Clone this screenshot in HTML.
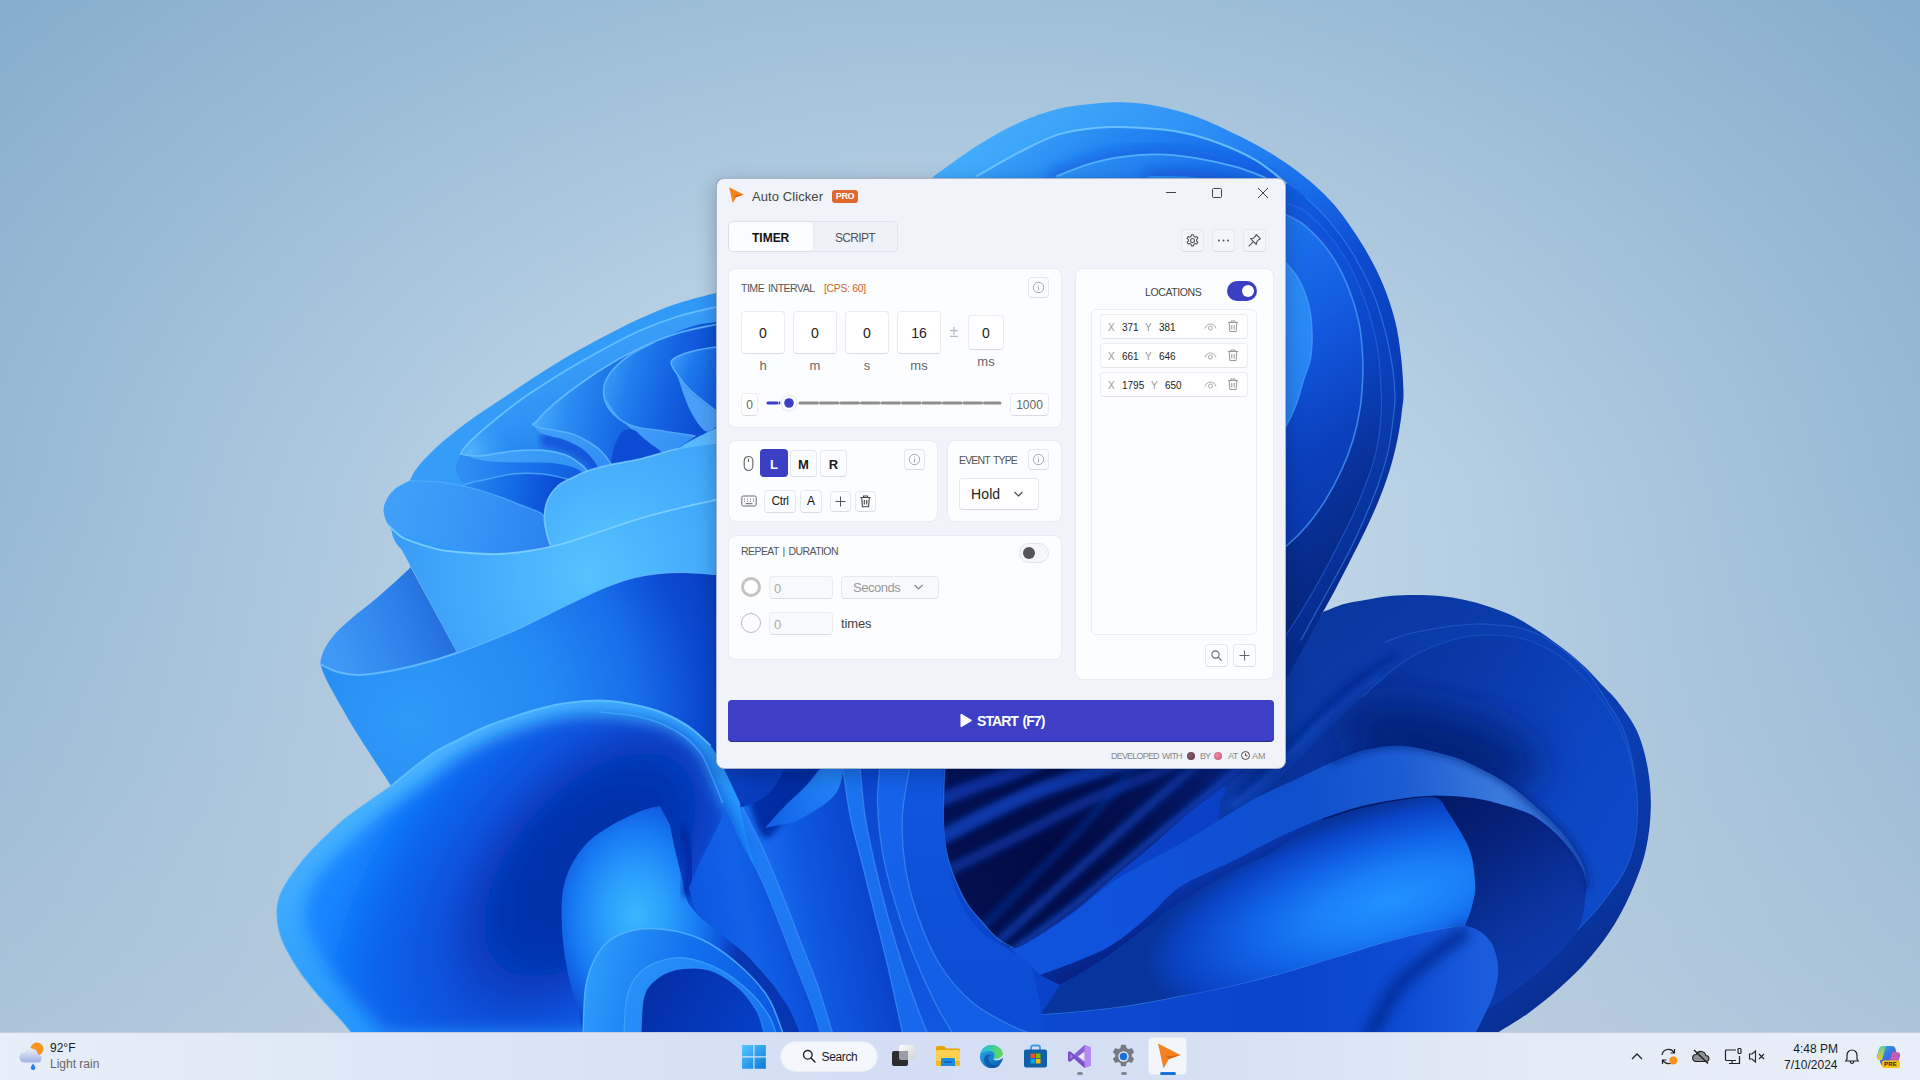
<!DOCTYPE html>
<html lang="en">
<head>
<meta charset="utf-8">
<title>Auto Clicker</title>
<style>
*{box-sizing:border-box;margin:0;padding:0}
html,body{width:1920px;height:1080px;overflow:hidden;background:#9fbfd9;font-family:"Liberation Sans",sans-serif;}
#desk{position:absolute;left:0;top:0;width:1920px;height:1080px;overflow:hidden}
#wall{position:absolute;left:0;top:0}
/* ---------- window ---------- */
#win{position:absolute;left:716px;top:178px;width:570px;height:591px;background:#f0f3f9;border:1px solid #a9b4c6;border-radius:8px;box-shadow:0 6px 20px rgba(0,10,50,.26),0 0 1px rgba(0,0,0,.3);color:#333}
.abs{position:absolute}
#wc{position:absolute;left:0;top:0;width:0;height:0;color:#333}
.loc{border-color:#eceef4 !important;border-bottom-color:#e2e5ec !important}
.lx{font-size:10px;line-height:13px;color:#222}
.ft{font-size:9px;line-height:12px;color:#8a8a8a}
.em{display:inline-block;width:8px;height:8px;border-radius:4px;vertical-align:-1px;box-sizing:border-box}
.card{position:absolute;background:#fcfdff;border:1px solid #e8ebf3;border-radius:8px}
.btn{position:absolute;background:#fcfdff;border:1px solid #e6e8ef;border-bottom-color:#d9dce5;border-radius:4px}
.lbl{position:absolute;font-size:10.5px;color:#555;white-space:nowrap;letter-spacing:-.1px}
.num{position:absolute;background:#fff;border:1px solid #eaecf2;border-bottom-color:#d9dce4;border-radius:4px;font-size:14px;color:#222;text-align:center}
.unit{position:absolute;font-size:13px;color:#666;text-align:center;width:40px}
.t{position:absolute;white-space:nowrap}
/* ---------- taskbar ---------- */
#tb{position:absolute;left:0;top:1032px;width:1920px;height:48px;background:linear-gradient(90deg,#e6eef8 0%,#dfe8f6 18%,#d3def4 45%,#d6e0f4 62%,#e3ebf6 80%,#e9eff8 100%);border-top:1px solid #c3cedd}
#tbc{position:absolute;left:0;top:0;width:0;height:0}
#tbc .t{color:#1b1b1b;font-size:12px}
</style>
</head>
<body>
<div id="desk">
<svg id="wall" width="1920" height="1080" viewBox="0 0 1920 1080">
<defs>
<radialGradient id="bg" gradientUnits="userSpaceOnUse" cx="960" cy="700" r="1300"><stop offset="0" stop-color="#cfe0ee"/><stop offset="0.3" stop-color="#c0d6e7"/><stop offset="0.55" stop-color="#a9c6dd"/><stop offset="0.8" stop-color="#93b6d3"/><stop offset="1" stop-color="#7fa9ca"/></radialGradient>
<linearGradient id="bgl" gradientUnits="userSpaceOnUse" x1="0" y1="0" x2="0" y2="1080"><stop offset="0" stop-color="#7ea8c9" stop-opacity="0.25"/><stop offset="0.45" stop-color="#a6c1d9" stop-opacity="0"/><stop offset="1" stop-color="#c2cfdd" stop-opacity="0.6"/></linearGradient>
<linearGradient id="A0" gradientUnits="userSpaceOnUse" x1="1000" y1="120" x2="1400" y2="560"><stop offset="0" stop-color="#42acfb"/><stop offset="0.22" stop-color="#2f92f6"/><stop offset="0.42" stop-color="#1a70ec"/><stop offset="0.58" stop-color="#0c4bd0"/><stop offset="0.75" stop-color="#0a3cb6"/><stop offset="1" stop-color="#062a88"/></linearGradient>
<linearGradient id="A1" gradientUnits="userSpaceOnUse" x1="1000" y1="130" x2="1390" y2="560"><stop offset="0" stop-color="#3ea4fa"/><stop offset="0.15" stop-color="#2486f2"/><stop offset="0.35" stop-color="#1468e8"/><stop offset="0.55" stop-color="#0c4cd2"/><stop offset="0.75" stop-color="#0b40ba"/><stop offset="1" stop-color="#062c8e"/></linearGradient>
<linearGradient id="A2" gradientUnits="userSpaceOnUse" x1="1060" y1="150" x2="1375" y2="560"><stop offset="0" stop-color="#3096f6"/><stop offset="0.2" stop-color="#1c74ec"/><stop offset="0.45" stop-color="#0f56dc"/><stop offset="0.65" stop-color="#0c46c6"/><stop offset="0.85" stop-color="#083098"/><stop offset="1" stop-color="#062880"/></linearGradient>
<linearGradient id="A3" gradientUnits="userSpaceOnUse" x1="1150" y1="180" x2="1350" y2="520"><stop offset="0" stop-color="#2a8cf4"/><stop offset="0.3" stop-color="#1b72ec"/><stop offset="0.55" stop-color="#1258de"/><stop offset="0.8" stop-color="#0b40bc"/><stop offset="1" stop-color="#0a38ac"/></linearGradient>
<linearGradient id="A4" gradientUnits="userSpaceOnUse" x1="1200" y1="230" x2="1310" y2="420"><stop offset="0" stop-color="#2f93f7"/><stop offset="0.6" stop-color="#2a8af5"/><stop offset="1" stop-color="#2582f2"/></linearGradient>
<filter id="bl8" x="-20%" y="-20%" width="140%" height="140%"><feGaussianBlur stdDeviation="8"/></filter><filter id="bl6" x="-20%" y="-20%" width="140%" height="140%"><feGaussianBlur stdDeviation="6"/></filter><filter id="bl3" x="-20%" y="-20%" width="140%" height="140%"><feGaussianBlur stdDeviation="3"/></filter><filter id="bl12" x="-30%" y="-30%" width="160%" height="160%"><feGaussianBlur stdDeviation="12"/></filter><filter id="bl20" x="-40%" y="-40%" width="180%" height="180%"><feGaussianBlur stdDeviation="20"/></filter>
<linearGradient id="E0" gradientUnits="userSpaceOnUse" x1="600" y1="760" x2="1300" y2="1030"><stop offset="0" stop-color="#0a40c8"/><stop offset="0.3" stop-color="#0c4cd6"/><stop offset="0.6" stop-color="#0a44cc"/><stop offset="1" stop-color="#093cbe"/></linearGradient>
<linearGradient id="F0" gradientUnits="userSpaceOnUse" x1="1330" y1="600" x2="1640" y2="980"><stop offset="0" stop-color="#0a379f"/><stop offset="0.3" stop-color="#0b3cae"/><stop offset="0.6" stop-color="#0b3eb2"/><stop offset="0.85" stop-color="#09339c"/><stop offset="1" stop-color="#072a86"/></linearGradient>
<linearGradient id="F1" gradientUnits="userSpaceOnUse" x1="1340" y1="640" x2="1640" y2="900"><stop offset="0" stop-color="#0a38a4"/><stop offset="0.4" stop-color="#0b3fb4"/><stop offset="0.8" stop-color="#0e47c4"/><stop offset="1" stop-color="#0d44be"/></linearGradient>
<linearGradient id="F2" gradientUnits="userSpaceOnUse" x1="1380" y1="660" x2="1640" y2="820"><stop offset="0" stop-color="#09339c"/><stop offset="0.35" stop-color="#0a3aac"/><stop offset="0.7" stop-color="#0d45c0"/><stop offset="1" stop-color="#0e49c8"/></linearGradient>
<linearGradient id="F4" gradientUnits="userSpaceOnUse" x1="1440" y1="800" x2="1560" y2="980"><stop offset="0" stop-color="#041a66"/><stop offset="0.3" stop-color="#06227c"/><stop offset="0.65" stop-color="#0a339e"/><stop offset="1" stop-color="#0c3cb0"/></linearGradient>
<linearGradient id="F3" gradientUnits="userSpaceOnUse" x1="1100" y1="900" x2="1580" y2="850"><stop offset="0" stop-color="#0f52dc"/><stop offset="0.2" stop-color="#0f50d6"/><stop offset="0.45" stop-color="#1050cc"/><stop offset="0.65" stop-color="#1c5cd2"/><stop offset="0.85" stop-color="#3a7adc"/><stop offset="1" stop-color="#2a66d0"/></linearGradient>
<linearGradient id="F6" gradientUnits="userSpaceOnUse" x1="1200" y1="870" x2="1215" y2="900"><stop offset="0" stop-color="#0a38b0"/><stop offset="1" stop-color="#06248a"/></linearGradient>
<radialGradient id="F5" gradientUnits="userSpaceOnUse" cx="1390" cy="900" r="150" gradientTransform="translate(1390 900) rotate(-17) scale(1.7 .62) rotate(17) translate(-1390 -900)"><stop offset="0" stop-color="#2092ff"/><stop offset="0.3" stop-color="#1a80f8"/><stop offset="0.6" stop-color="#1060e4"/><stop offset="0.85" stop-color="#0a44c6"/><stop offset="1" stop-color="#08349e"/></radialGradient>
<linearGradient id="F7" gradientUnits="userSpaceOnUse" x1="1100" y1="1000" x2="1480" y2="1000"><stop offset="0" stop-color="#0c48d0"/><stop offset="0.5" stop-color="#0a44cc"/><stop offset="0.8" stop-color="#0d4cd4"/><stop offset="1" stop-color="#1a5cdc"/></linearGradient>
<radialGradient id="Eh" gradientUnits="userSpaceOnUse" cx="1050" cy="850" r="200"><stop offset="0" stop-color="#020a42"/><stop offset="0.5" stop-color="#03104f"/><stop offset="0.8" stop-color="#051868"/><stop offset="1" stop-color="#08268c"/></radialGradient>
<linearGradient id="E4" gradientUnits="userSpaceOnUse" x1="770" y1="900" x2="880" y2="880"><stop offset="0" stop-color="#186cf0"/><stop offset="0.35" stop-color="#0f58e0"/><stop offset="1" stop-color="#0a40c8"/></linearGradient>
<linearGradient id="E4b" gradientUnits="userSpaceOnUse" x1="770" y1="825" x2="825" y2="770"><stop offset="0" stop-color="#1464ea"/><stop offset="1" stop-color="#2488fa"/></linearGradient>
<linearGradient id="E3b" gradientUnits="userSpaceOnUse" x1="0" y1="766" x2="0" y2="1033"><stop offset="0" stop-color="#2280f6"/><stop offset="1" stop-color="#1a74f0"/></linearGradient>
<linearGradient id="E5" gradientUnits="userSpaceOnUse" x1="0" y1="766" x2="0" y2="1033"><stop offset="0" stop-color="#1a74f0"/><stop offset="1" stop-color="#1668ec"/></linearGradient>
<linearGradient id="E6" gradientUnits="userSpaceOnUse" x1="0" y1="766" x2="0" y2="1033"><stop offset="0" stop-color="#0b46ce"/><stop offset="1" stop-color="#1058e0"/></linearGradient>
<linearGradient id="E7" gradientUnits="userSpaceOnUse" x1="0" y1="766" x2="0" y2="1033"><stop offset="0" stop-color="#1564ea"/><stop offset="1" stop-color="#125ee6"/></linearGradient>
<linearGradient id="E9" gradientUnits="userSpaceOnUse" x1="0" y1="766" x2="0" y2="1033"><stop offset="0" stop-color="#0f56de"/><stop offset="1" stop-color="#0c4cd4"/></linearGradient>
<linearGradient id="B0" gradientUnits="userSpaceOnUse" x1="420" y1="300" x2="700" y2="560"><stop offset="0" stop-color="#3ca4fa"/><stop offset="0.5" stop-color="#3199f7"/><stop offset="1" stop-color="#2a8cf3"/></linearGradient>
<linearGradient id="B1" gradientUnits="userSpaceOnUse" x1="560" y1="360" x2="600" y2="470"><stop offset="0" stop-color="#3a9ef8"/><stop offset="0.4" stop-color="#2f92f5"/><stop offset="0.75" stop-color="#2482f0"/><stop offset="1" stop-color="#1a72ea"/></linearGradient>
<radialGradient id="B1g" gradientUnits="userSpaceOnUse" cx="470" cy="452" r="40"><stop offset="0" stop-color="#56b8fd" stop-opacity="0.9"/><stop offset="1" stop-color="#3a9ef8" stop-opacity="0"/></radialGradient>
<linearGradient id="B2" gradientUnits="userSpaceOnUse" x1="535" y1="410" x2="690" y2="440"><stop offset="0" stop-color="#48acfb"/><stop offset="0.2" stop-color="#2c8cf3"/><stop offset="0.55" stop-color="#1668e4"/><stop offset="1" stop-color="#0c4cd2"/></linearGradient>
<linearGradient id="B2u" gradientUnits="userSpaceOnUse" x1="540" y1="430" x2="600" y2="465"><stop offset="0" stop-color="#429ff8"/><stop offset="1" stop-color="#3290f4"/></linearGradient>
<linearGradient id="B3" gradientUnits="userSpaceOnUse" x1="603" y1="395" x2="716" y2="425"><stop offset="0" stop-color="#3696f6"/><stop offset="0.18" stop-color="#2280ee"/><stop offset="0.55" stop-color="#1260e0"/><stop offset="1" stop-color="#0a46cc"/></linearGradient>
<linearGradient id="B3u" gradientUnits="userSpaceOnUse" x1="610" y1="400" x2="680" y2="450"><stop offset="0" stop-color="#4aa6fa"/><stop offset="1" stop-color="#3590f4"/></linearGradient>
<linearGradient id="B4" gradientUnits="userSpaceOnUse" x1="670" y1="365" x2="716" y2="385"><stop offset="0" stop-color="#3a98f7"/><stop offset="0.4" stop-color="#1e78ec"/><stop offset="1" stop-color="#1462e2"/></linearGradient>
<linearGradient id="B1u" gradientUnits="userSpaceOnUse" x1="470" y1="458" x2="585" y2="470"><stop offset="0" stop-color="#44a4fa"/><stop offset="1" stop-color="#3292f4"/></linearGradient>
<linearGradient id="B7" gradientUnits="userSpaceOnUse" x1="465" y1="470" x2="575" y2="475"><stop offset="0" stop-color="#2e8ef4"/><stop offset="0.5" stop-color="#1c74ec"/><stop offset="1" stop-color="#1060e0"/></linearGradient>
<linearGradient id="B6" gradientUnits="userSpaceOnUse" x1="470" y1="485" x2="560" y2="500"><stop offset="0" stop-color="#2486f0"/><stop offset="0.5" stop-color="#1468e6"/><stop offset="1" stop-color="#0848d0"/></linearGradient>
<linearGradient id="C6" gradientUnits="userSpaceOnUse" x1="390" y1="500" x2="560" y2="540"><stop offset="0" stop-color="#40a0f9"/><stop offset="0.5" stop-color="#3794f6"/><stop offset="1" stop-color="#2a80ee"/></linearGradient>
<radialGradient id="C5" gradientUnits="userSpaceOnUse" cx="610" cy="560" r="190"><stop offset="0" stop-color="#58c4ff"/><stop offset="0.45" stop-color="#48b0fc"/><stop offset="1" stop-color="#3a9ef8"/></radialGradient>
<radialGradient id="C2o" gradientUnits="userSpaceOnUse" cx="410" cy="720" r="350"><stop offset="0" stop-color="#2f9af8"/><stop offset="0.4" stop-color="#248af3"/><stop offset="0.65" stop-color="#186eea"/><stop offset="0.83" stop-color="#0b4ad2"/><stop offset="1" stop-color="#083cbc"/></radialGradient>
<linearGradient id="C2i" gradientUnits="userSpaceOnUse" x1="330" y1="650" x2="470" y2="600"><stop offset="0" stop-color="#4099f6"/><stop offset="0.45" stop-color="#2f84ec"/><stop offset="1" stop-color="#1c62d4"/></linearGradient>
<radialGradient id="C1" gradientUnits="userSpaceOnUse" cx="590" cy="575" r="230"><stop offset="0" stop-color="#56c2ff"/><stop offset="0.4" stop-color="#47b0fc"/><stop offset="0.8" stop-color="#3a9ef8"/><stop offset="1" stop-color="#3496f6"/></radialGradient>
<linearGradient id="D0" gradientUnits="userSpaceOnUse" x1="285" y1="790" x2="420" y2="1030"><stop offset="0" stop-color="#52b8ff"/><stop offset="0.45" stop-color="#38a6fe"/><stop offset="1" stop-color="#2092fc"/></linearGradient>
<radialGradient id="D1" gradientUnits="userSpaceOnUse" cx="590" cy="865" r="200" gradientTransform="translate(590 865) rotate(-48.400) scale(1.800 1) translate(-590 -865)"><stop offset="0" stop-color="#052ea6"/><stop offset="0.3" stop-color="#0434ae"/><stop offset="0.42" stop-color="#0840c4"/><stop offset="0.52" stop-color="#0a50da"/><stop offset="0.66" stop-color="#0c5ce6"/><stop offset="0.82" stop-color="#0e6af2"/><stop offset="1" stop-color="#1486ff"/></radialGradient>
<radialGradient id="Dc" gradientUnits="userSpaceOnUse" cx="636" cy="915" r="125" gradientTransform="translate(636 915) scale(.850 1.150) translate(-636 -915)"><stop offset="0" stop-color="#38b8ff"/><stop offset="0.3" stop-color="#2a9efc"/><stop offset="0.58" stop-color="#187cf4"/><stop offset="0.8" stop-color="#0e58de"/><stop offset="0.93" stop-color="#0a40c2"/><stop offset="1" stop-color="#0836b2"/></radialGradient>
<linearGradient id="Dw" gradientUnits="userSpaceOnUse" x1="690" y1="900" x2="790" y2="880"><stop offset="0" stop-color="#0d56e0"/><stop offset="0.5" stop-color="#1262e8"/><stop offset="1" stop-color="#0b4cd8"/></linearGradient>
<linearGradient id="Dr1" gradientUnits="userSpaceOnUse" x1="590" y1="960" x2="780" y2="1000"><stop offset="0" stop-color="#2c9cfb"/><stop offset="0.5" stop-color="#1270ee"/><stop offset="1" stop-color="#0c58e0"/></linearGradient>
<linearGradient id="Dr2" gradientUnits="userSpaceOnUse" x1="630" y1="960" x2="770" y2="1030"><stop offset="0" stop-color="#2a90f8"/><stop offset="0.6" stop-color="#1e84f6"/><stop offset="1" stop-color="#1670ee"/></linearGradient>
<linearGradient id="Dr3" gradientUnits="userSpaceOnUse" x1="650" y1="970" x2="760" y2="1033"><stop offset="0" stop-color="#042ea6"/><stop offset="0.6" stop-color="#0538b8"/><stop offset="1" stop-color="#0640c8"/></linearGradient>
</defs>
<rect width="1920" height="1080" fill="url(#bg)"/><rect width="1920" height="1080" fill="url(#bgl)"/>
<path fill="url(#A0)"  d="M934.0,176.0C941.5,170.8 964.8,153.4 979.0,144.5C993.2,135.6 1005.8,128.6 1019.0,122.7C1032.2,116.8 1044.8,112.2 1058.0,109.0C1071.2,105.8 1086.3,104.4 1098.0,103.3C1109.7,102.2 1118.2,102.0 1128.0,102.5C1137.8,103.0 1145.5,103.6 1157.0,106.0C1168.5,108.4 1183.7,112.2 1197.0,117.0C1210.3,121.8 1226.2,129.8 1237.0,135.0C1247.8,140.2 1253.8,143.3 1262.0,148.0C1270.2,152.7 1278.7,158.0 1286.0,163.0C1293.3,168.0 1299.7,172.8 1306.0,178.0C1312.3,183.2 1318.0,187.9 1324.0,194.0C1330.0,200.1 1335.0,205.2 1342.0,214.6C1349.0,224.0 1359.2,239.1 1366.0,250.7C1372.8,262.3 1378.2,272.8 1383.0,284.4C1387.8,296.0 1392.0,308.5 1395.0,320.5C1398.0,332.5 1399.6,344.6 1401.0,356.5C1402.4,368.4 1403.3,383.1 1403.5,392.0C1403.7,400.9 1402.8,403.2 1402.0,410.0C1401.2,416.8 1400.5,424.0 1398.7,433.0C1397.0,442.0 1394.5,453.6 1391.5,464.0C1388.5,474.4 1385.0,484.7 1380.7,495.5C1376.5,506.3 1371.3,517.8 1366.0,529.0C1360.7,540.2 1354.3,552.5 1349.0,563.0C1343.7,573.5 1338.3,583.8 1334.0,592.0C1329.7,600.2 1324.8,608.7 1323.0,612.0L1323.0,612.0C1309.2,640.0 1310.5,752.0 1240.0,780.0C1169.5,808.0 956.7,871.7 900.0,780.0C843.3,688.3 900.0,321.7 900.0,230.0Z"/>
<path fill="url(#A1)"  d="M977.0,176.0C984.0,172.1 1005.5,159.3 1019.0,152.4C1032.5,145.5 1044.8,138.7 1058.0,134.6C1071.2,130.5 1084.7,128.8 1098.0,127.7C1111.3,126.6 1124.8,127.1 1138.0,127.7C1151.2,128.3 1163.8,129.1 1177.0,131.6C1190.2,134.1 1203.8,137.7 1217.0,142.5C1230.2,147.3 1244.5,153.6 1256.0,160.3C1267.5,167.1 1277.7,176.8 1286.0,183.0C1294.3,189.2 1298.7,191.2 1306.0,197.7C1313.3,204.2 1322.0,212.2 1330.0,221.8C1338.0,231.4 1346.8,243.5 1354.0,255.5C1361.2,267.5 1368.2,281.2 1373.5,294.0C1378.8,306.8 1382.3,320.1 1385.5,332.5C1388.7,344.9 1391.1,358.2 1392.7,368.6C1394.3,379.0 1394.8,387.9 1395.0,395.0C1395.2,402.1 1395.0,402.3 1394.0,411.0C1393.0,419.7 1391.4,435.3 1389.0,447.0C1386.6,458.7 1383.3,469.7 1379.5,481.0C1375.7,492.3 1371.0,503.0 1366.0,514.7C1361.0,526.4 1355.4,539.0 1349.4,551.0C1343.4,563.0 1335.2,577.4 1330.0,587.0C1324.8,596.6 1322.8,599.8 1318.0,608.6C1313.2,617.4 1303.8,634.8 1301.0,640.0L1301.0,640.0C1290.8,663.3 1306.8,756.7 1240.0,780.0C1173.2,803.3 956.7,868.3 900.0,780.0C843.3,691.7 900.0,338.3 900.0,250.0Z"/>
<path fill="none" stroke="#0f58de" stroke-width="16" stroke-opacity="0.6" stroke-linecap="round" filter="url(#bl6)" d="M1057.0,176.0C1062.2,174.1 1077.8,167.4 1088.0,164.3C1098.2,161.2 1106.5,159.0 1118.0,157.3C1129.5,155.7 1143.8,154.2 1157.0,154.4C1170.2,154.6 1183.7,156.2 1197.0,158.3C1210.3,160.4 1225.5,163.9 1237.0,167.2C1248.5,170.5 1257.8,172.1 1266.0,178.0C1274.2,183.9 1279.3,196.9 1286.0,202.6C1292.7,208.3 1302.7,210.4 1306.0,212.0"/>
<path fill="url(#A2)"  d="M1057.0,176.0C1062.2,174.1 1077.8,167.4 1088.0,164.3C1098.2,161.2 1106.5,159.0 1118.0,157.3C1129.5,155.7 1143.8,154.2 1157.0,154.4C1170.2,154.6 1183.7,156.2 1197.0,158.3C1210.3,160.4 1225.5,163.9 1237.0,167.2C1248.5,170.5 1257.8,172.1 1266.0,178.0C1274.2,183.9 1279.3,196.9 1286.0,202.6C1292.7,208.3 1298.7,206.4 1306.0,212.0C1313.3,217.6 1322.8,227.2 1330.0,236.0C1337.2,244.8 1343.4,253.7 1349.4,265.0C1355.4,276.3 1361.6,291.2 1366.0,303.6C1370.4,316.1 1373.5,327.0 1376.0,339.7C1378.5,352.4 1379.9,367.3 1380.7,380.0C1381.5,392.7 1381.8,404.0 1381.0,416.0C1380.2,428.0 1378.5,440.8 1376.0,452.0C1373.5,463.2 1370.0,472.7 1366.0,483.5C1362.0,494.3 1357.2,505.8 1352.0,517.0C1346.8,528.2 1341.0,539.3 1335.0,551.0C1329.0,562.7 1322.5,575.0 1315.7,587.0C1308.9,599.0 1299.0,615.0 1294.0,623.0C1289.0,631.0 1287.3,633.0 1286.0,635.0L1286.0,635.0C1278.3,659.2 1304.3,755.8 1240.0,780.0C1175.7,804.2 956.7,860.0 900.0,780.0C843.3,700.0 900.0,380.0 900.0,300.0Z"/>
<path fill="none" stroke="#0c4cd2" stroke-width="14" stroke-opacity="0.55" stroke-linecap="round" filter="url(#bl6)" d="M1150.0,176.0C1158.3,176.3 1183.3,175.3 1200.0,178.0C1216.7,180.7 1235.7,185.9 1250.0,192.0C1264.3,198.1 1276.7,208.8 1286.0,214.6C1295.3,220.4 1298.7,220.2 1306.0,226.6C1313.3,233.0 1326.0,248.6 1330.0,253.0"/>
<path fill="url(#A3)"  d="M1150.0,176.0C1158.3,176.3 1183.3,175.3 1200.0,178.0C1216.7,180.7 1235.7,185.9 1250.0,192.0C1264.3,198.1 1276.7,208.8 1286.0,214.6C1295.3,220.4 1298.7,220.2 1306.0,226.6C1313.3,233.0 1323.2,243.4 1330.0,253.0C1336.8,262.6 1342.2,272.7 1347.0,284.4C1351.8,296.1 1356.4,311.0 1359.0,323.0C1361.6,335.0 1362.0,347.0 1362.6,356.5C1363.2,366.0 1363.0,371.2 1362.6,380.0C1362.2,388.8 1361.6,399.0 1360.0,409.0C1358.4,419.0 1356.0,430.0 1353.0,440.0C1350.0,450.0 1346.6,458.9 1342.0,469.0C1337.4,479.1 1331.3,490.7 1325.3,500.3C1319.3,509.9 1312.5,519.2 1306.0,526.8C1299.5,534.4 1294.1,539.5 1286.4,546.0C1278.7,552.5 1264.4,562.7 1260.0,566.0L1260.0,566.0C1250.0,588.3 1260.0,677.7 1200.0,700.0C1140.0,722.3 950.0,766.7 900.0,700.0C850.0,633.3 900.0,366.7 900.0,300.0Z"/>
<path fill="none" stroke="#4a9cf8" stroke-width="1.6" stroke-opacity="0.75" stroke-linecap="round"  d="M1286.0,214.6C1289.3,216.6 1298.7,220.2 1306.0,226.6C1313.3,233.0 1323.2,243.4 1330.0,253.0C1336.8,262.6 1342.2,272.7 1347.0,284.4C1351.8,296.1 1356.4,311.0 1359.0,323.0C1361.6,335.0 1362.0,347.0 1362.6,356.5C1363.2,366.0 1363.0,371.2 1362.6,380.0C1362.2,388.8 1361.6,399.0 1360.0,409.0C1358.4,419.0 1356.0,430.0 1353.0,440.0C1350.0,450.0 1346.6,458.9 1342.0,469.0C1337.4,479.1 1331.3,490.7 1325.3,500.3C1319.3,509.9 1312.5,519.2 1306.0,526.8C1299.5,534.4 1294.1,539.5 1286.4,546.0C1278.7,552.5 1264.4,562.7 1260.0,566.0"/>
<path fill="url(#A4)"  d="M1200.0,200.0C1208.3,204.7 1235.7,217.6 1250.0,228.0C1264.3,238.4 1277.8,254.1 1286.0,262.7C1294.2,271.3 1295.2,272.8 1299.0,279.6C1302.8,286.4 1306.3,295.6 1308.5,303.6C1310.7,311.6 1311.6,318.9 1312.0,327.7C1312.4,336.5 1312.4,347.8 1311.0,356.5C1309.6,365.2 1306.1,372.1 1303.7,380.0C1301.3,387.9 1299.4,396.4 1296.5,404.0C1293.6,411.6 1290.8,418.0 1286.4,425.7C1282.0,433.4 1272.7,445.9 1270.0,450.0L1270.0,450.0C1258.3,475.0 1261.7,575.0 1200.0,600.0C1138.3,625.0 950.0,650.0 900.0,600.0C850.0,550.0 900.0,350.0 900.0,300.0Z"/>
<path fill="none" stroke="#55aaff" stroke-width="1.2" stroke-opacity="0.6" stroke-linecap="round"  d="M1286.0,262.7C1288.2,265.5 1295.2,272.8 1299.0,279.6C1302.8,286.4 1306.3,295.6 1308.5,303.6C1310.7,311.6 1311.6,318.9 1312.0,327.7C1312.4,336.5 1312.4,347.8 1311.0,356.5C1309.6,365.2 1306.1,372.1 1303.7,380.0C1301.3,387.9 1299.4,396.4 1296.5,404.0C1293.6,411.6 1290.8,418.0 1286.4,425.7C1282.0,433.4 1272.7,445.9 1270.0,450.0"/>
<path fill="none" stroke="#74c8ff" stroke-width="2" stroke-opacity="0.85" stroke-linecap="round"  d="M977.0,176.0C984.0,172.1 1005.5,159.3 1019.0,152.4C1032.5,145.5 1044.8,138.7 1058.0,134.6C1071.2,130.5 1084.7,128.8 1098.0,127.7C1111.3,126.6 1124.8,127.1 1138.0,127.7C1151.2,128.3 1163.8,129.1 1177.0,131.6C1190.2,134.1 1203.8,137.7 1217.0,142.5C1230.2,147.3 1244.5,153.6 1256.0,160.3C1267.5,167.1 1281.0,179.2 1286.0,183.0"/>
<path fill="none" stroke="#3f8ef0" stroke-width="1.2" stroke-opacity="0.55" stroke-linecap="round"  d="M1306.0,197.7C1310.0,201.7 1322.0,212.2 1330.0,221.8C1338.0,231.4 1346.8,243.5 1354.0,255.5C1361.2,267.5 1368.2,281.2 1373.5,294.0C1378.8,306.8 1382.3,320.1 1385.5,332.5C1388.7,344.9 1391.1,358.2 1392.7,368.6C1394.3,379.0 1394.8,387.9 1395.0,395.0C1395.2,402.1 1395.0,402.3 1394.0,411.0C1393.0,419.7 1391.4,435.3 1389.0,447.0C1386.6,458.7 1383.3,469.7 1379.5,481.0C1375.7,492.3 1371.0,503.0 1366.0,514.7C1361.0,526.4 1355.4,539.0 1349.4,551.0C1343.4,563.0 1335.2,577.4 1330.0,587.0C1324.8,596.6 1322.8,599.8 1318.0,608.6C1313.2,617.4 1303.8,634.8 1301.0,640.0"/>
<path fill="none" stroke="#62bcff" stroke-width="1.8" stroke-opacity="0.8" stroke-linecap="round"  d="M1057.0,176.0C1062.2,174.1 1077.8,167.4 1088.0,164.3C1098.2,161.2 1106.5,159.0 1118.0,157.3C1129.5,155.7 1143.8,154.2 1157.0,154.4C1170.2,154.6 1183.7,156.2 1197.0,158.3C1210.3,160.4 1225.5,163.9 1237.0,167.2C1248.5,170.5 1261.2,176.2 1266.0,178.0"/>
<path fill="none" stroke="#2f7ae8" stroke-width="1.1" stroke-opacity="0.5" stroke-linecap="round"  d="M1286.0,202.6C1289.3,204.2 1298.7,206.4 1306.0,212.0C1313.3,217.6 1322.8,227.2 1330.0,236.0C1337.2,244.8 1343.4,253.7 1349.4,265.0C1355.4,276.3 1361.6,291.2 1366.0,303.6C1370.4,316.1 1373.5,327.0 1376.0,339.7C1378.5,352.4 1379.9,367.3 1380.7,380.0C1381.5,392.7 1381.8,404.0 1381.0,416.0C1380.2,428.0 1378.5,440.8 1376.0,452.0C1373.5,463.2 1370.0,472.7 1366.0,483.5C1362.0,494.3 1357.2,505.8 1352.0,517.0C1346.8,528.2 1341.0,539.3 1335.0,551.0C1329.0,562.7 1322.5,575.0 1315.7,587.0C1308.9,599.0 1299.0,615.0 1294.0,623.0C1289.0,631.0 1287.3,633.0 1286.0,635.0"/>
<path fill="url(#E0)"  d="M560.0,700.0C683.3,700.0 1176.7,644.5 1300.0,700.0C1423.3,755.5 1423.3,977.5 1300.0,1033.0C1176.7,1088.5 683.3,1033.0 560.0,1033.0Z"/>
<path fill="url(#F0)"  d="M1323.0,612.0C1326.5,610.7 1337.0,606.0 1344.0,604.0C1351.0,602.0 1357.3,601.3 1365.0,600.0C1372.7,598.7 1381.7,596.8 1390.0,596.0C1398.3,595.2 1406.7,595.0 1415.0,595.0C1423.3,595.0 1431.7,595.2 1440.0,596.0C1448.3,596.8 1456.7,598.2 1465.0,600.0C1473.3,601.8 1481.7,604.2 1490.0,607.0C1498.3,609.8 1506.7,612.8 1515.0,617.0C1523.3,621.2 1531.7,626.5 1540.0,632.0C1548.3,637.5 1557.5,644.2 1565.0,650.0C1572.5,655.8 1578.8,661.2 1585.0,667.0C1591.2,672.8 1596.5,679.2 1602.0,685.0C1607.5,690.8 1612.2,694.3 1618.0,702.0C1623.8,709.7 1632.0,720.0 1637.0,731.0C1642.0,742.0 1645.4,755.2 1647.7,768.0C1650.0,780.8 1651.1,794.5 1650.8,808.0C1650.5,821.5 1648.8,836.0 1646.0,849.0C1643.2,862.0 1638.9,873.6 1633.7,886.0C1628.5,898.4 1622.3,911.5 1615.0,923.4C1607.7,935.3 1599.3,946.6 1590.0,957.5C1580.7,968.4 1569.3,979.3 1559.0,988.6C1548.7,997.9 1538.3,1006.0 1528.0,1013.4C1517.7,1020.8 1502.2,1029.7 1497.0,1033.0L1497.0,1033.0C1452.5,1033.0 1274.5,1078.5 1230.0,1033.0C1185.5,987.5 1220.7,818.8 1230.0,760.0C1239.3,701.2 1276.7,693.3 1286.0,680.0Z"/>
<path fill="url(#F1)"  d="M1245.0,775.0C1247.8,772.8 1255.2,768.7 1262.0,762.0C1268.8,755.3 1277.2,745.3 1286.0,735.0C1294.8,724.7 1306.0,710.0 1315.0,700.0C1324.0,690.0 1332.2,682.5 1340.0,675.0C1347.8,667.5 1354.5,660.5 1362.0,655.0C1369.5,649.5 1377.8,645.3 1385.0,642.0C1392.2,638.7 1398.0,637.0 1405.0,635.0C1412.0,633.0 1419.2,631.5 1427.0,630.0C1434.8,628.5 1443.7,627.0 1452.0,626.0C1460.3,625.0 1469.5,624.2 1477.0,624.0C1484.5,623.8 1490.7,624.5 1497.0,625.0C1503.3,625.5 1508.7,625.7 1515.0,627.0C1521.3,628.3 1528.8,630.5 1535.0,633.0C1541.2,635.5 1545.8,638.0 1552.0,642.0C1558.2,646.0 1565.7,651.5 1572.0,657.0C1578.3,662.5 1584.3,667.8 1590.0,675.0C1595.7,682.2 1600.3,690.7 1606.0,700.0C1611.7,709.3 1619.2,718.2 1624.0,731.0C1628.8,743.8 1632.8,761.5 1635.0,777.0C1637.2,792.5 1638.2,809.4 1637.0,824.0C1635.8,838.6 1633.2,851.5 1627.5,864.5C1621.8,877.5 1611.2,891.1 1603.0,902.0C1594.8,912.9 1587.9,918.8 1578.0,929.6C1568.1,940.4 1556.1,955.4 1543.7,966.8C1531.3,978.2 1516.4,988.7 1503.4,998.0C1490.5,1007.3 1474.9,1016.9 1466.0,1022.7C1457.1,1028.5 1452.7,1031.3 1450.0,1033.0L1450.0,1033.0C1411.7,1033.0 1258.3,1071.8 1220.0,1033.0C1181.7,994.2 1220.0,838.8 1220.0,800.0Z"/>
<path fill="url(#F2)"  d="M1225.0,822.0C1230.2,818.0 1245.8,806.3 1256.0,798.0C1266.2,789.7 1276.2,781.3 1286.0,772.0C1295.8,762.7 1306.0,751.0 1315.0,742.0C1324.0,733.0 1332.2,725.5 1340.0,718.0C1347.8,710.5 1353.7,704.7 1362.0,697.0C1370.3,689.3 1381.2,679.0 1390.0,672.0C1398.8,665.0 1407.5,659.3 1415.0,655.0C1422.5,650.7 1428.8,648.5 1435.0,646.0C1441.2,643.5 1446.0,641.7 1452.0,640.0C1458.0,638.3 1464.7,636.8 1471.0,636.0C1477.3,635.2 1483.8,635.0 1490.0,635.0C1496.2,635.0 1501.8,635.2 1508.0,636.0C1514.2,636.8 1520.7,638.0 1527.0,640.0C1533.3,642.0 1539.7,644.7 1546.0,648.0C1552.3,651.3 1558.7,655.0 1565.0,660.0C1571.3,665.0 1577.8,671.3 1584.0,678.0C1590.2,684.7 1596.7,692.7 1602.0,700.0C1607.3,707.3 1611.8,714.2 1616.0,722.0C1620.2,729.8 1624.0,738.2 1627.0,747.0C1630.0,755.8 1632.5,764.5 1634.0,775.0C1635.5,785.5 1635.7,804.2 1636.0,810.0L1636.0,810.0C1634.6,819.1 1633.0,849.2 1627.5,864.5C1622.0,879.8 1611.2,891.1 1603.0,902.0C1594.8,912.9 1587.9,918.8 1578.0,929.6C1568.1,940.4 1556.1,955.4 1543.7,966.8C1531.3,978.2 1516.4,988.7 1503.4,998.0C1490.5,1007.3 1474.9,1016.9 1466.0,1022.7C1457.1,1028.5 1452.7,1031.3 1450.0,1033.0L1450.0,1033.0C1408.3,1033.0 1241.7,1065.2 1200.0,1033.0C1158.3,1000.8 1200.0,872.2 1200.0,840.0Z"/>
<path fill="none" stroke="#06278c" stroke-width="8" stroke-opacity="0.6" stroke-linecap="round" filter="url(#bl3)" d="M1240.0,792.0C1245.0,787.5 1260.0,774.8 1270.0,765.0C1280.0,755.2 1290.0,743.3 1300.0,733.0C1310.0,722.7 1320.0,712.2 1330.0,703.0C1340.0,693.8 1349.2,686.0 1360.0,678.0C1370.8,670.0 1389.2,658.8 1395.0,655.0"/>
<path fill="none" stroke="#1a58d0" stroke-width="5" stroke-opacity="0.5" stroke-linecap="round" filter="url(#bl3)" d="M1232.0,806.0C1237.0,802.0 1252.0,791.0 1262.0,782.0C1272.0,773.0 1282.0,762.0 1292.0,752.0C1302.0,742.0 1312.3,731.0 1322.0,722.0C1331.7,713.0 1340.3,705.7 1350.0,698.0C1359.7,690.3 1375.0,679.7 1380.0,676.0"/>
<ellipse cx="1442" cy="748" rx="100" ry="36" fill="#051c6c" opacity=".8" filter="url(#bl20)" transform="rotate(14 1442 748)"/>
<path fill="url(#F4)"  d="M1322.6,818.5C1328.5,816.6 1345.8,810.2 1358.0,807.0C1370.2,803.8 1383.2,801.4 1396.0,799.5C1408.8,797.6 1421.8,795.9 1434.6,795.6C1447.4,795.4 1461.9,796.6 1472.8,798.0C1483.7,799.4 1490.8,801.5 1500.0,804.0C1509.2,806.5 1520.5,809.7 1528.0,813.0C1535.5,816.3 1539.8,820.1 1545.0,824.0C1550.2,827.9 1554.8,832.3 1559.0,836.5C1563.2,840.7 1566.8,844.9 1570.0,849.0C1573.2,853.1 1575.7,857.0 1578.0,861.0C1580.3,865.0 1582.5,868.8 1584.0,873.0C1585.5,877.2 1586.5,883.8 1587.0,886.0L1587.0,886.0C1585.5,893.3 1585.2,916.1 1578.0,929.6C1570.8,943.1 1556.1,955.4 1543.7,966.8C1531.3,978.2 1516.4,988.7 1503.4,998.0C1490.5,1007.3 1474.9,1016.9 1466.0,1022.7C1457.1,1028.5 1452.7,1031.3 1450.0,1033.0L1450.0,1033.0L1322.0,1033.0Z"/>
<path fill="url(#F3)"  d="M1012.0,950.0C1016.7,947.5 1029.5,941.3 1040.0,935.0C1050.5,928.7 1063.3,920.5 1075.0,912.0C1086.7,903.5 1097.5,892.7 1110.0,884.0C1122.5,875.3 1138.3,866.7 1150.0,860.0C1161.7,853.3 1168.7,850.5 1180.0,844.0C1191.3,837.5 1205.3,828.7 1218.0,821.0C1230.7,813.3 1243.2,804.8 1256.0,798.0C1268.8,791.2 1281.8,786.0 1294.6,780.0C1307.4,774.0 1321.0,767.0 1332.7,762.0C1344.4,757.0 1353.1,752.7 1365.0,750.0C1376.9,747.3 1389.7,745.0 1404.0,746.0C1418.3,747.0 1438.8,752.7 1450.6,756.0C1462.4,759.3 1467.3,762.4 1475.0,766.0C1482.7,769.6 1490.2,773.6 1497.0,777.6C1503.8,781.6 1509.8,785.4 1516.0,790.0C1522.2,794.6 1528.7,800.5 1534.4,805.5C1540.1,810.5 1544.8,814.8 1550.0,820.0C1555.2,825.2 1561.2,831.2 1565.5,836.5C1569.8,841.8 1572.9,846.8 1576.0,852.0C1579.1,857.2 1582.2,861.8 1584.0,867.5C1585.8,873.2 1586.5,882.9 1587.0,886.0L1587.0,886.0C1586.5,883.8 1585.5,877.2 1584.0,873.0C1582.5,868.8 1580.3,865.0 1578.0,861.0C1575.7,857.0 1573.2,853.1 1570.0,849.0C1566.8,844.9 1563.2,840.7 1559.0,836.5C1554.8,832.3 1550.2,827.9 1545.0,824.0C1539.8,820.1 1535.5,816.3 1528.0,813.0C1520.5,809.7 1509.2,806.5 1500.0,804.0C1490.8,801.5 1483.7,799.4 1472.8,798.0C1461.9,796.6 1447.4,795.4 1434.6,795.6C1421.8,795.9 1408.8,797.6 1396.0,799.5C1383.2,801.4 1370.2,803.8 1358.0,807.0C1345.8,810.2 1335.3,813.7 1322.6,818.5C1309.9,823.3 1297.3,828.8 1282.0,836.0C1266.7,843.2 1248.0,853.5 1231.0,862.0C1214.0,870.5 1193.5,878.2 1180.0,887.0C1166.5,895.8 1161.3,905.3 1150.0,915.0C1138.7,924.7 1124.5,937.2 1112.0,945.0C1099.5,952.8 1087.0,957.0 1075.0,962.0C1063.0,967.0 1045.8,972.8 1040.0,975.0Z"/>
<path fill="none" stroke="#06227c" stroke-width="7" stroke-opacity="0.5" stroke-linecap="round" filter="url(#bl3)" d="M1332.7,762.0C1338.1,760.0 1353.1,752.7 1365.0,750.0C1376.9,747.3 1389.7,745.0 1404.0,746.0C1418.3,747.0 1438.8,752.7 1450.6,756.0C1462.4,759.3 1467.3,762.4 1475.0,766.0C1482.7,769.6 1490.2,773.6 1497.0,777.6C1503.8,781.6 1509.8,785.4 1516.0,790.0C1522.2,794.6 1528.7,800.5 1534.4,805.5C1540.1,810.5 1544.8,814.8 1550.0,820.0C1555.2,825.2 1561.2,831.2 1565.5,836.5C1569.8,841.8 1572.9,846.8 1576.0,852.0C1579.1,857.2 1582.2,861.8 1584.0,867.5C1585.8,873.2 1586.5,882.9 1587.0,886.0"/>
<path fill="url(#F6)"  d="M1040.0,975.0C1045.8,972.8 1063.0,967.0 1075.0,962.0C1087.0,957.0 1099.5,952.8 1112.0,945.0C1124.5,937.2 1138.7,924.7 1150.0,915.0C1161.3,905.3 1166.5,895.8 1180.0,887.0C1193.5,878.2 1214.0,870.5 1231.0,862.0C1248.0,853.5 1266.7,843.2 1282.0,836.0C1297.3,828.8 1315.8,821.4 1322.6,818.5L1322.6,820.0C1317.9,822.7 1303.5,830.7 1294.6,836.4C1285.7,842.1 1279.6,848.1 1269.0,854.0C1258.4,859.9 1245.8,863.9 1231.0,872.0C1216.2,880.1 1196.8,891.3 1180.0,902.6C1163.2,913.9 1145.0,929.1 1130.0,940.0C1115.0,950.9 1101.7,960.5 1090.0,968.0C1078.3,975.5 1065.0,982.2 1060.0,985.0Z"/>
<path fill="url(#F5)"  d="M1060.0,985.0C1065.0,982.2 1078.3,975.5 1090.0,968.0C1101.7,960.5 1115.0,950.9 1130.0,940.0C1145.0,929.1 1163.2,913.9 1180.0,902.6C1196.8,891.3 1216.2,880.1 1231.0,872.0C1245.8,863.9 1258.4,859.9 1269.0,854.0C1279.6,848.1 1285.7,842.1 1294.6,836.4C1303.5,830.7 1317.9,822.7 1322.6,820.0L1358.0,809.0C1364.3,807.7 1383.2,802.9 1396.0,801.0C1408.8,799.1 1425.9,795.7 1434.6,797.5C1443.3,799.3 1443.8,806.4 1448.0,812.0C1452.2,817.6 1456.7,825.3 1460.0,831.0C1463.3,836.7 1465.9,840.8 1468.0,846.0C1470.1,851.2 1471.6,855.2 1472.8,862.0C1474.0,868.8 1475.2,880.7 1475.3,887.0C1475.4,893.3 1474.4,895.7 1473.5,900.0C1472.6,904.3 1471.4,908.5 1470.0,912.7C1468.6,917.0 1465.8,923.4 1465.0,925.5L1434.6,930.6C1426.1,932.7 1400.7,938.3 1383.7,943.0C1366.7,947.7 1349.7,953.5 1332.7,958.6C1315.8,963.7 1299.0,969.1 1282.0,973.8C1265.0,978.5 1248.0,982.8 1231.0,986.6C1214.0,990.4 1196.8,993.6 1180.0,996.8C1163.2,1000.0 1146.7,1003.5 1130.0,1006.0C1113.3,1008.5 1095.0,1010.5 1080.0,1012.0C1065.0,1013.5 1046.7,1014.5 1040.0,1015.0L1040.0,1015.0L1060.0,985.0Z"/>
<path fill="none" stroke="#3d8af0" stroke-width="1.4" stroke-opacity="0.7" stroke-linecap="round"  d="M1465.0,925.5C1459.9,926.4 1448.1,927.7 1434.6,930.6C1421.0,933.5 1400.7,938.3 1383.7,943.0C1366.7,947.7 1349.7,953.5 1332.7,958.6C1315.8,963.7 1299.0,969.1 1282.0,973.8C1265.0,978.5 1248.0,982.8 1231.0,986.6C1214.0,990.4 1196.8,993.6 1180.0,996.8C1163.2,1000.0 1146.7,1003.5 1130.0,1006.0C1113.3,1008.5 1095.0,1010.5 1080.0,1012.0C1065.0,1013.5 1046.7,1014.5 1040.0,1015.0"/>
<path fill="url(#F7)"  d="M1040.0,1015.0C1046.7,1014.5 1065.0,1013.5 1080.0,1012.0C1095.0,1010.5 1113.3,1008.5 1130.0,1006.0C1146.7,1003.5 1163.2,1000.0 1180.0,996.8C1196.8,993.6 1214.0,990.4 1231.0,986.6C1248.0,982.8 1265.0,978.5 1282.0,973.8C1299.0,969.1 1315.8,963.7 1332.7,958.6C1349.7,953.5 1366.7,947.7 1383.7,943.0C1400.7,938.3 1421.0,933.5 1434.6,930.6C1448.1,927.7 1459.9,926.4 1465.0,925.5L1476.0,929.0C1477.6,930.1 1482.8,933.2 1485.5,935.7C1488.2,938.2 1490.3,941.0 1492.0,944.0C1493.7,947.0 1494.7,950.0 1495.7,953.5C1496.7,957.0 1497.6,961.2 1498.0,965.0C1498.4,968.8 1498.5,972.2 1498.0,976.4C1497.5,980.6 1496.2,985.7 1495.0,990.0C1493.8,994.3 1492.4,997.7 1490.6,1002.0C1488.8,1006.3 1486.5,1010.8 1484.0,1016.0C1481.5,1021.2 1476.8,1030.2 1475.3,1033.0L1475.3,1033.0L1040.0,1033.0Z"/>
<path fill="none" stroke="#052a90" stroke-width="16" stroke-opacity="0.75" stroke-linecap="round" filter="url(#bl6)" d="M1462.0,934.0C1458.3,936.7 1446.7,945.0 1440.0,950.0C1433.3,955.0 1429.3,957.5 1422.0,964.0C1414.7,970.5 1404.5,977.5 1396.0,989.0C1387.5,1000.5 1375.2,1025.7 1371.0,1033.0"/>
<path fill="none" stroke="#2d6fdc" stroke-width="1.2" stroke-opacity="0.5" stroke-linecap="round"  d="M1385.0,642.0C1388.3,640.8 1398.0,637.0 1405.0,635.0C1412.0,633.0 1419.2,631.5 1427.0,630.0C1434.8,628.5 1443.7,627.0 1452.0,626.0C1460.3,625.0 1469.5,624.2 1477.0,624.0C1484.5,623.8 1490.7,624.5 1497.0,625.0C1503.3,625.5 1508.7,625.7 1515.0,627.0C1521.3,628.3 1528.8,630.5 1535.0,633.0C1541.2,635.5 1545.8,638.0 1552.0,642.0C1558.2,646.0 1565.7,651.5 1572.0,657.0C1578.3,662.5 1584.3,667.8 1590.0,675.0C1595.7,682.2 1600.3,690.7 1606.0,700.0C1611.7,709.3 1619.2,718.2 1624.0,731.0C1628.8,743.8 1632.8,761.5 1635.0,777.0C1637.2,792.5 1638.2,809.4 1637.0,824.0C1635.8,838.6 1633.2,851.5 1627.5,864.5C1621.8,877.5 1611.2,891.1 1603.0,902.0C1594.8,912.9 1582.2,925.0 1578.0,929.6"/>
<path fill="none" stroke="#2a68d6" stroke-width="1.1" stroke-opacity="0.4" stroke-linecap="round"  d="M1362.0,697.0C1366.7,692.8 1381.2,679.0 1390.0,672.0C1398.8,665.0 1407.5,659.3 1415.0,655.0C1422.5,650.7 1428.8,648.5 1435.0,646.0C1441.2,643.5 1446.0,641.7 1452.0,640.0C1458.0,638.3 1464.7,636.8 1471.0,636.0C1477.3,635.2 1483.8,635.0 1490.0,635.0C1496.2,635.0 1501.8,635.2 1508.0,636.0C1514.2,636.8 1520.7,638.0 1527.0,640.0C1533.3,642.0 1539.7,644.7 1546.0,648.0C1552.3,651.3 1558.7,655.0 1565.0,660.0C1571.3,665.0 1577.8,671.3 1584.0,678.0C1590.2,684.7 1596.7,692.7 1602.0,700.0C1607.3,707.3 1611.8,714.2 1616.0,722.0C1620.2,729.8 1624.0,738.2 1627.0,747.0C1630.0,755.8 1632.8,770.3 1634.0,775.0"/>
<path fill="url(#Eh)"  d="M945.0,766.0C944.8,771.7 943.7,788.5 943.5,800.0C943.3,811.5 943.1,824.7 944.0,835.0C944.9,845.3 946.8,853.7 949.0,862.0C951.2,870.3 954.3,877.8 957.5,885.0C960.7,892.2 963.8,898.8 968.0,905.0C972.2,911.2 977.7,917.0 982.5,922.5C987.3,928.0 992.0,933.8 997.0,938.0C1002.0,942.2 1007.0,947.0 1012.5,947.5C1018.0,948.0 1019.6,947.2 1030.0,941.0C1040.4,934.8 1061.7,920.2 1075.0,910.0C1088.3,899.8 1097.5,890.5 1110.0,880.0C1122.5,869.5 1136.7,858.3 1150.0,847.0C1163.3,835.7 1177.5,822.3 1190.0,812.0C1202.5,801.7 1215.0,792.7 1225.0,785.0C1235.0,777.3 1245.8,769.2 1250.0,766.0Z"/>
<clipPath id="hc"><path d="M945.0,766.0C944.8,771.7 943.7,788.5 943.5,800.0C943.3,811.5 943.1,824.7 944.0,835.0C944.9,845.3 946.8,853.7 949.0,862.0C951.2,870.3 954.3,877.8 957.5,885.0C960.7,892.2 963.8,898.8 968.0,905.0C972.2,911.2 977.7,917.0 982.5,922.5C987.3,928.0 992.0,933.8 997.0,938.0C1002.0,942.2 1007.0,947.0 1012.5,947.5C1018.0,948.0 1019.6,947.2 1030.0,941.0C1040.4,934.8 1061.7,920.2 1075.0,910.0C1088.3,899.8 1097.5,890.5 1110.0,880.0C1122.5,869.5 1136.7,858.3 1150.0,847.0C1163.3,835.7 1177.5,822.3 1190.0,812.0C1202.5,801.7 1215.0,792.7 1225.0,785.0C1235.0,777.3 1245.8,769.2 1250.0,766.0Z"/></clipPath><g clip-path="url(#hc)">
<path fill="none" stroke="#0a3ab4" stroke-width="14" stroke-opacity="0.8" stroke-linecap="round" filter="url(#bl3)" d="M940.0,800.0C945.0,798.0 958.3,792.3 970.0,788.0C981.7,783.7 998.3,778.3 1010.0,774.0C1021.7,769.7 1035.0,764.0 1040.0,762.0"/>
<path fill="none" stroke="#0c40bc" stroke-width="15" stroke-opacity="0.85" stroke-linecap="round" filter="url(#bl3)" d="M940.0,838.0C947.5,834.2 968.3,823.0 985.0,815.0C1001.7,807.0 1020.8,797.5 1040.0,790.0C1059.2,782.5 1083.3,775.0 1100.0,770.0C1116.7,765.0 1133.3,761.7 1140.0,760.0"/>
<path fill="none" stroke="#0a38ac" stroke-width="11" stroke-opacity="0.7" stroke-linecap="round" filter="url(#bl3)" d="M945.0,872.0C952.5,868.3 974.2,857.8 990.0,850.0C1005.8,842.2 1023.3,833.3 1040.0,825.0C1056.7,816.7 1071.7,808.3 1090.0,800.0C1108.3,791.7 1134.2,781.7 1150.0,775.0C1165.8,768.3 1179.2,762.5 1185.0,760.0"/>
<path fill="none" stroke="#0a34a4" stroke-width="7" stroke-opacity="0.55" stroke-linecap="round" filter="url(#bl3)" d="M985.0,925.0C992.5,917.5 1015.0,895.0 1030.0,880.0C1045.0,865.0 1060.8,850.0 1075.0,835.0C1089.2,820.0 1104.2,802.5 1115.0,790.0C1125.8,777.5 1135.8,765.0 1140.0,760.0"/>
<path fill="none" stroke="#0b3cb2" stroke-width="9" stroke-opacity="0.75" stroke-linecap="round" filter="url(#bl3)" d="M1000.0,940.0C1008.3,932.5 1033.3,910.0 1050.0,895.0C1066.7,880.0 1083.3,865.0 1100.0,850.0C1116.7,835.0 1133.3,819.7 1150.0,805.0C1166.7,790.3 1191.7,769.2 1200.0,762.0"/>
<path fill="none" stroke="#0d48c8" stroke-width="8" stroke-opacity="0.8" stroke-linecap="round" filter="url(#bl3)" d="M1015.0,950.0C1025.0,942.5 1052.5,923.0 1075.0,905.0C1097.5,887.0 1125.0,862.8 1150.0,842.0C1175.0,821.2 1208.3,793.7 1225.0,780.0C1241.7,766.3 1245.8,763.3 1250.0,760.0"/>
</g>
<path fill="none" stroke="#3f8ef6" stroke-width="1.3" stroke-opacity="0.55" stroke-linecap="round"  d="M945.0,766.0C944.8,771.7 943.7,788.5 943.5,800.0C943.3,811.5 943.1,824.7 944.0,835.0C944.9,845.3 946.8,853.7 949.0,862.0C951.2,870.3 954.3,877.8 957.5,885.0C960.7,892.2 963.8,898.8 968.0,905.0C972.2,911.2 977.7,917.0 982.5,922.5C987.3,928.0 992.0,933.8 997.0,938.0C1002.0,942.2 1009.9,945.9 1012.5,947.5"/>
<path fill="url(#E4)"  d="M722.5,766.0C725.4,772.1 733.3,788.9 740.0,802.5C746.7,816.1 755.4,832.1 762.5,847.5C769.6,862.9 776.2,879.6 782.5,895.0C788.8,910.4 794.2,925.0 800.0,940.0C805.8,955.0 812.1,969.5 817.5,985.0C822.9,1000.5 830.0,1025.0 832.5,1033.0L902.5,1033.0C900.0,1021.7 892.1,984.7 887.5,965.0C882.9,945.3 879.2,931.7 875.0,915.0C870.8,898.3 866.7,881.7 862.5,865.0C858.3,848.3 853.3,831.5 850.0,815.0C846.7,798.5 843.8,774.2 842.5,766.0Z"/>
<path fill="#052ca0" filter="url(#bl3)" opacity=".95" d="M738.0,766.0C739.7,771.7 743.5,788.0 748.0,800.0C752.5,812.0 758.0,836.0 765.0,838.0C772.0,840.0 782.5,820.5 790.0,812.0C797.5,803.5 804.0,794.7 810.0,787.0C816.0,779.3 823.3,769.5 826.0,766.0Z"/>
<path fill="url(#E4b)" opacity=".92" d="M765.0,828.0C768.3,824.3 778.2,813.0 785.0,806.0C791.8,799.0 799.5,792.7 806.0,786.0C812.5,779.3 818.0,769.3 824.0,766.0C830.0,762.7 839.7,762.0 842.0,766.0C844.3,770.0 841.3,783.3 838.0,790.0C834.7,796.7 829.2,800.7 822.0,806.0C814.8,811.3 799.5,819.3 795.0,822.0Z"/>
<path fill="url(#E3b)"  d="M707.5,766.0C710.0,772.1 717.1,790.2 722.5,802.5C727.9,814.8 733.8,827.5 740.0,840.0C746.2,852.5 753.8,864.2 760.0,877.5C766.2,890.8 771.7,905.4 777.5,920.0C783.3,934.6 789.6,951.2 795.0,965.0C800.4,978.8 805.8,991.2 810.0,1002.5C814.2,1013.8 818.3,1027.9 820.0,1033.0L832.5,1033.0C830.0,1025.0 822.9,1000.5 817.5,985.0C812.1,969.5 805.8,955.0 800.0,940.0C794.2,925.0 788.8,910.4 782.5,895.0C776.2,879.6 769.6,862.9 762.5,847.5C755.4,832.1 746.7,816.1 740.0,802.5C733.3,788.9 725.4,772.1 722.5,766.0Z"/>
<path fill="url(#E5)"  d="M842.5,766.0C843.8,774.2 846.7,798.5 850.0,815.0C853.3,831.5 858.3,848.3 862.5,865.0C866.7,881.7 870.8,898.3 875.0,915.0C879.2,931.7 882.9,945.3 887.5,965.0C892.1,984.7 900.0,1021.7 902.5,1033.0L927.5,1033.0C926.2,1030.0 924.2,1026.3 920.0,1015.0C915.8,1003.7 907.9,981.7 902.5,965.0C897.1,948.3 892.1,931.7 887.5,915.0C882.9,898.3 878.8,881.7 875.0,865.0C871.2,848.3 867.5,831.5 865.0,815.0C862.5,798.5 860.8,774.2 860.0,766.0Z"/>
<path fill="url(#E6)"  d="M860.0,766.0C860.8,774.2 862.5,798.5 865.0,815.0C867.5,831.5 871.2,848.3 875.0,865.0C878.8,881.7 882.9,898.3 887.5,915.0C892.1,931.7 897.1,948.3 902.5,965.0C907.9,981.7 915.8,1003.7 920.0,1015.0C924.2,1026.3 926.2,1030.0 927.5,1033.0L952.5,1033.0C949.6,1027.9 941.7,1015.9 935.0,1002.5C928.3,989.1 919.2,969.2 912.5,952.5C905.8,935.8 900.0,919.2 895.0,902.5C890.0,885.8 885.4,869.2 882.5,852.5C879.6,835.8 877.9,816.9 877.5,802.5C877.1,788.1 879.6,772.1 880.0,766.0Z"/>
<path fill="url(#E7)"  d="M880.0,766.0C879.6,772.1 877.1,788.1 877.5,802.5C877.9,816.9 879.6,835.8 882.5,852.5C885.4,869.2 890.0,885.8 895.0,902.5C900.0,919.2 905.8,935.8 912.5,952.5C919.2,969.2 928.3,989.1 935.0,1002.5C941.7,1015.9 949.6,1027.9 952.5,1033.0L1030.0,1033.0C1026.7,1031.7 1019.6,1030.1 1010.0,1025.0C1000.4,1019.9 984.2,1012.5 972.5,1002.5C960.8,992.5 949.2,979.6 940.0,965.0C930.8,950.4 923.3,931.7 917.5,915.0C911.7,898.3 907.5,881.7 905.0,865.0C902.5,848.3 901.7,831.5 902.5,815.0C903.3,798.5 908.8,774.2 910.0,766.0Z"/>
<path fill="url(#E9)"  d="M910.0,766.0C908.8,774.2 903.3,798.5 902.5,815.0C901.7,831.5 902.5,848.3 905.0,865.0C907.5,881.7 911.7,898.3 917.5,915.0C923.3,931.7 930.8,950.4 940.0,965.0C949.2,979.6 960.8,992.5 972.5,1002.5C984.2,1012.5 1000.4,1019.9 1010.0,1025.0C1019.6,1030.1 1026.7,1031.7 1030.0,1033.0L1030.0,1033.0C1032.5,1033.0 1043.0,1036.0 1045.0,1033.0C1047.0,1030.0 1044.5,1026.3 1042.0,1015.0C1039.5,1003.7 1035.3,975.7 1030.0,965.0C1024.7,954.3 1018.8,957.1 1010.0,951.0C1001.2,944.9 986.7,938.7 977.5,928.5C968.3,918.3 960.4,904.8 955.0,890.0C949.6,875.2 947.1,856.7 945.0,840.0C942.9,823.3 942.7,802.3 942.5,790.0C942.3,777.7 943.8,770.0 944.0,766.0Z"/>
<path fill="none" stroke="#4a98fa" stroke-width="1.3" stroke-opacity="0.6" stroke-linecap="round"  d="M707.5,766.0C710.0,772.1 717.1,790.2 722.5,802.5C727.9,814.8 733.8,827.5 740.0,840.0C746.2,852.5 753.8,864.2 760.0,877.5C766.2,890.8 771.7,905.4 777.5,920.0C783.3,934.6 789.6,951.2 795.0,965.0C800.4,978.8 805.8,991.2 810.0,1002.5C814.2,1013.8 818.3,1027.9 820.0,1033.0"/>
<path fill="none" stroke="#4a98fa" stroke-width="1.3" stroke-opacity="0.6" stroke-linecap="round"  d="M722.5,766.0C725.4,772.1 733.3,788.9 740.0,802.5C746.7,816.1 755.4,832.1 762.5,847.5C769.6,862.9 776.2,879.6 782.5,895.0C788.8,910.4 794.2,925.0 800.0,940.0C805.8,955.0 812.1,969.5 817.5,985.0C822.9,1000.5 830.0,1025.0 832.5,1033.0"/>
<path fill="none" stroke="#4a98fa" stroke-width="1.3" stroke-opacity="0.6" stroke-linecap="round"  d="M842.5,766.0C843.8,774.2 846.7,798.5 850.0,815.0C853.3,831.5 858.3,848.3 862.5,865.0C866.7,881.7 870.8,898.3 875.0,915.0C879.2,931.7 882.9,945.3 887.5,965.0C892.1,984.7 900.0,1021.7 902.5,1033.0"/>
<path fill="none" stroke="#4a98fa" stroke-width="1.3" stroke-opacity="0.6" stroke-linecap="round"  d="M860.0,766.0C860.8,774.2 862.5,798.5 865.0,815.0C867.5,831.5 871.2,848.3 875.0,865.0C878.8,881.7 882.9,898.3 887.5,915.0C892.1,931.7 897.1,948.3 902.5,965.0C907.9,981.7 915.8,1003.7 920.0,1015.0C924.2,1026.3 926.2,1030.0 927.5,1033.0"/>
<path fill="none" stroke="#4a98fa" stroke-width="1.3" stroke-opacity="0.6" stroke-linecap="round"  d="M880.0,766.0C879.6,772.1 877.1,788.1 877.5,802.5C877.9,816.9 879.6,835.8 882.5,852.5C885.4,869.2 890.0,885.8 895.0,902.5C900.0,919.2 905.8,935.8 912.5,952.5C919.2,969.2 928.3,989.1 935.0,1002.5C941.7,1015.9 949.6,1027.9 952.5,1033.0"/>
<path fill="none" stroke="#4a98fa" stroke-width="1.3" stroke-opacity="0.6" stroke-linecap="round"  d="M910.0,766.0C908.8,774.2 903.3,798.5 902.5,815.0C901.7,831.5 902.5,848.3 905.0,865.0C907.5,881.7 911.7,898.3 917.5,915.0C923.3,931.7 930.8,950.4 940.0,965.0C949.2,979.6 960.8,992.5 972.5,1002.5C984.2,1012.5 1000.4,1019.9 1010.0,1025.0C1019.6,1030.1 1026.7,1031.7 1030.0,1033.0"/>
<path fill="url(#B0)"  d="M716.0,293.0C709.3,294.8 688.8,299.7 676.0,304.0C663.2,308.3 651.3,313.4 639.0,319.0C626.7,324.6 614.3,331.0 602.0,337.5C589.7,344.0 577.0,350.9 565.0,358.0C553.0,365.1 541.1,372.8 530.0,380.0C518.9,387.2 508.7,394.2 498.5,401.0C488.3,407.8 478.9,413.7 469.0,421.0C459.1,428.3 447.4,437.5 439.0,445.0C430.6,452.5 423.3,460.2 418.5,466.0C413.7,471.8 411.4,477.7 410.0,480.0L410.0,480.0C411.7,493.3 361.7,536.7 420.0,560.0C478.3,583.3 703.3,665.0 760.0,620.0C816.7,575.0 760.0,345.0 760.0,290.0Z"/>
<path fill="url(#B1)"  d="M716.0,307.0C709.3,308.7 688.8,313.0 676.0,317.0C663.2,321.0 651.3,325.5 639.0,331.0C626.7,336.5 614.3,343.3 602.0,350.0C589.7,356.7 576.2,364.3 565.0,371.0C553.8,377.7 542.7,385.0 535.0,390.0C527.3,395.0 525.1,396.5 519.0,401.0C512.9,405.5 505.7,411.2 498.5,417.0C491.3,422.8 481.6,431.0 476.0,436.0C470.4,441.0 467.6,444.0 465.0,447.0C462.4,450.0 461.4,452.8 460.7,454.0L460.7,454.0C462.2,454.2 466.2,455.2 470.0,455.5C473.8,455.8 476.5,456.4 483.7,455.6C490.9,454.9 503.1,451.9 513.0,451.0C522.9,450.1 534.3,449.8 543.0,450.4C551.7,451.0 558.8,452.6 565.0,454.8C571.2,457.0 576.3,461.0 580.0,463.7C583.7,466.4 586.2,469.8 587.4,471.0L587.4,471.0C616.2,475.8 731.2,528.5 760.0,500.0C788.8,471.5 760.0,333.3 760.0,300.0Z"/>
<path fill="url(#B1g)"  d="M535.0,390.0C532.3,391.8 525.1,396.5 519.0,401.0C512.9,405.5 505.7,411.2 498.5,417.0C491.3,422.8 481.6,431.0 476.0,436.0C470.4,441.0 467.6,444.0 465.0,447.0C462.4,450.0 461.4,452.8 460.7,454.0L460.7,454.0C462.2,454.2 466.2,455.2 470.0,455.5C473.8,455.8 476.5,456.4 483.7,455.6C490.9,454.9 503.1,451.9 513.0,451.0C522.9,450.1 538.0,450.5 543.0,450.4L543.0,450.4L535.0,390.0Z"/>
<path fill="none" stroke="#0c4cd6" stroke-width="16" stroke-opacity="0.8" stroke-linecap="round" filter="url(#bl3)" d="M548.0,440.0C551.7,441.0 563.0,443.2 570.0,446.0C577.0,448.8 585.0,453.3 590.0,457.0C595.0,460.7 598.3,466.2 600.0,468.0"/>
<path fill="url(#B2)"  d="M716.0,324.5C709.3,326.0 688.8,329.7 676.0,333.7C663.2,337.7 651.3,342.6 639.0,348.5C626.7,354.4 614.3,361.2 602.0,369.0C589.7,376.8 574.5,387.8 565.0,395.0C555.5,402.2 549.6,407.7 545.0,412.0C540.4,416.3 539.5,418.6 537.4,420.7C535.3,422.8 533.4,423.8 532.6,424.4L532.6,424.4C533.8,425.0 537.0,427.1 540.0,428.0C543.0,428.9 545.0,428.6 550.4,429.6C555.8,430.6 565.9,431.8 572.6,434.0C579.3,436.2 585.5,440.0 590.4,443.0C595.3,446.0 598.6,448.6 602.0,452.0C605.4,455.4 609.5,461.8 611.0,463.7L611.0,463.7C635.8,464.8 735.2,493.9 760.0,470.0C784.8,446.1 760.0,345.0 760.0,320.0Z"/>
<path fill="url(#B2u)"  d="M532.6,424.4C533.8,425.0 537.0,427.1 540.0,428.0C543.0,428.9 545.0,428.6 550.4,429.6C555.8,430.6 565.9,431.8 572.6,434.0C579.3,436.2 585.5,440.0 590.4,443.0C595.3,446.0 598.6,448.6 602.0,452.0C605.4,455.4 609.5,461.8 611.0,463.7L611.0,464.0L599.0,469.6L599.0,469.6C598.3,468.3 597.2,465.2 594.8,462.0C592.4,458.8 589.4,454.1 584.4,450.4C579.4,446.7 571.9,442.7 565.0,440.0C558.1,437.3 548.4,436.5 543.0,434.0C537.6,431.5 534.3,426.5 532.6,425.0Z"/>
<path fill="url(#B3)"  d="M716.0,322.0C711.7,322.8 700.5,323.5 690.0,327.0C679.5,330.5 663.0,338.3 653.0,343.0C643.0,347.7 637.0,350.2 630.0,355.0C623.0,359.8 615.4,366.2 611.0,372.0C606.6,377.8 603.7,383.7 603.5,390.0C603.3,396.3 605.4,404.1 610.0,410.0C614.6,415.9 622.2,422.0 631.0,425.5C639.8,429.0 652.3,429.2 663.0,431.0C673.7,432.8 686.2,434.5 695.0,436.0C703.8,437.5 712.5,439.3 716.0,440.0L716.0,440.0L716.0,322.0Z"/>
<path fill="url(#B3u)"  d="M604.0,396.0C605.3,398.5 607.5,406.0 612.0,411.0C616.5,416.0 622.5,422.6 631.0,426.0C639.5,429.4 652.3,429.8 663.0,431.5C673.7,433.2 689.7,435.7 695.0,436.5L695.0,436.5C691.5,438.8 679.7,447.4 674.0,450.0C668.3,452.6 665.7,453.7 661.0,452.0C656.3,450.3 651.2,444.0 646.0,440.0C640.8,436.0 634.8,432.2 630.0,428.0C625.2,423.8 621.3,420.3 617.0,415.0C612.7,409.7 606.2,399.2 604.0,396.0Z"/>
<path fill="#0c4cd4"  d="M611.0,464.0C611.5,461.3 612.2,453.3 614.0,448.0C615.8,442.7 618.7,435.0 622.0,432.0C625.3,429.0 630.0,428.5 634.0,430.0C638.0,431.5 641.5,437.2 646.0,441.0C650.5,444.8 662.0,450.2 661.0,453.0C660.0,455.8 643.5,457.2 640.0,458.0Z"/>
<path fill="url(#B4)"  d="M716.0,347.0C713.0,347.5 703.8,348.7 698.0,350.0C692.2,351.3 685.5,353.0 681.0,355.0C676.5,357.0 671.7,358.8 671.0,362.0C670.3,365.2 673.8,369.3 677.0,374.0C680.2,378.7 683.5,383.8 690.0,390.0C696.5,396.2 711.7,407.5 716.0,411.0L716.0,411.0L716.0,347.0Z"/>
<path fill="#4a9ff8"  d="M677.0,375.0C679.2,377.7 683.5,384.8 690.0,391.0C696.5,397.2 711.7,408.5 716.0,412.0L716.0,427.0C714.2,427.7 709.3,433.8 705.0,431.0C700.7,428.2 694.7,419.3 690.0,410.0C685.3,400.7 679.2,380.8 677.0,375.0Z"/>
<path fill="url(#B1u)"  d="M460.7,454.0C462.2,454.2 466.2,455.2 470.0,455.5C473.8,455.8 476.5,456.4 483.7,455.6C490.9,454.9 503.1,451.9 513.0,451.0C522.9,450.1 534.3,449.8 543.0,450.4C551.7,451.0 558.8,452.6 565.0,454.8C571.2,457.0 576.3,461.0 580.0,463.7C583.7,466.4 586.2,469.8 587.4,471.0L587.4,471.0L585.0,474.0L585.0,474.0C583.3,473.0 579.5,469.7 575.0,468.0C570.5,466.3 563.1,464.6 557.8,463.7C552.5,462.8 550.5,462.7 543.0,462.5C535.5,462.3 522.9,462.8 513.0,462.5C503.1,462.2 492.4,462.1 483.7,460.7C475.0,459.3 464.5,455.1 460.7,454.0Z"/>
<path fill="url(#B7)"  d="M460.7,454.0C464.5,455.1 475.0,459.3 483.7,460.7C492.4,462.1 503.1,462.2 513.0,462.5C522.9,462.8 535.5,462.3 543.0,462.5C550.5,462.7 552.5,462.8 557.8,463.7C563.1,464.6 570.5,466.3 575.0,468.0C579.5,469.7 583.3,473.0 585.0,474.0L585.0,474.0L571.0,480.0L571.0,480.0C570.0,479.8 569.7,479.5 565.0,478.5C560.3,477.5 551.7,474.8 543.0,474.0C534.3,473.2 522.9,473.0 513.0,474.0C503.1,475.0 490.4,478.7 483.7,480.0C477.0,481.3 476.3,481.2 473.0,482.0C469.7,482.8 465.2,484.5 463.7,485.0L463.7,485.0C462.4,482.5 456.5,475.2 456.0,470.0C455.5,464.8 459.9,456.7 460.7,454.0Z"/>
<path fill="url(#B6)"  d="M463.7,485.0C465.2,484.5 469.7,482.8 473.0,482.0C476.3,481.2 477.0,481.3 483.7,480.0C490.4,478.7 503.1,475.0 513.0,474.0C522.9,473.0 534.3,473.2 543.0,474.0C551.7,474.8 560.3,477.5 565.0,478.5C569.7,479.5 570.0,479.8 571.0,480.0L571.0,480.0L560.0,520.0L546.0,519.0C545.0,517.9 544.2,514.9 540.0,512.6C535.8,510.3 527.6,507.7 520.7,505.0C513.8,502.3 507.1,499.2 498.5,496.3C489.9,493.4 474.8,489.3 469.0,487.4C463.2,485.5 464.6,485.4 463.7,485.0Z"/>
<path fill="none" stroke="#70c4ff" stroke-width="1.8" stroke-opacity="0.85" stroke-linecap="round"  d="M716.0,307.0C709.3,308.7 688.8,313.0 676.0,317.0C663.2,321.0 651.3,325.5 639.0,331.0C626.7,336.5 614.3,343.3 602.0,350.0C589.7,356.7 576.2,364.3 565.0,371.0C553.8,377.7 542.7,385.0 535.0,390.0C527.3,395.0 525.1,396.5 519.0,401.0C512.9,405.5 505.7,411.2 498.5,417.0C491.3,422.8 481.6,431.0 476.0,436.0C470.4,441.0 467.6,444.0 465.0,447.0C462.4,450.0 461.4,452.8 460.7,454.0"/>
<path fill="none" stroke="#6cc0ff" stroke-width="1.7" stroke-opacity="0.85" stroke-linecap="round"  d="M716.0,324.5C709.3,326.0 688.8,329.7 676.0,333.7C663.2,337.7 651.3,342.6 639.0,348.5C626.7,354.4 614.3,361.2 602.0,369.0C589.7,376.8 574.5,387.8 565.0,395.0C555.5,402.2 549.6,407.7 545.0,412.0C540.4,416.3 539.5,418.6 537.4,420.7C535.3,422.8 533.4,423.8 532.6,424.4"/>
<path fill="none" stroke="#62b8ff" stroke-width="1.6" stroke-opacity="0.8" stroke-linecap="round"  d="M653.0,343.0C649.2,345.0 637.0,350.2 630.0,355.0C623.0,359.8 615.4,366.2 611.0,372.0C606.6,377.8 603.7,383.7 603.5,390.0C603.3,396.3 605.4,404.1 610.0,410.0C614.6,415.9 622.2,422.0 631.0,425.5C639.8,429.0 652.3,429.2 663.0,431.0C673.7,432.8 689.7,435.2 695.0,436.0"/>
<path fill="none" stroke="#6abcff" stroke-width="1.5" stroke-opacity="0.8" stroke-linecap="round"  d="M716.0,347.0C713.0,347.5 703.8,348.7 698.0,350.0C692.2,351.3 685.5,353.0 681.0,355.0C676.5,357.0 671.7,358.8 671.0,362.0C670.3,365.2 673.8,369.3 677.0,374.0C680.2,378.7 683.5,383.8 690.0,390.0C696.5,396.2 711.7,407.5 716.0,411.0"/>
<path fill="none" stroke="#6cc0ff" stroke-width="1.6" stroke-opacity="0.8" stroke-linecap="round"  d="M460.7,454.0C462.2,454.2 466.2,455.2 470.0,455.5C473.8,455.8 476.5,456.4 483.7,455.6C490.9,454.9 503.1,451.9 513.0,451.0C522.9,450.1 534.3,449.8 543.0,450.4C551.7,451.0 558.8,452.6 565.0,454.8C571.2,457.0 576.3,461.0 580.0,463.7C583.7,466.4 586.2,469.8 587.4,471.0"/>
<path fill="none" stroke="#62b8ff" stroke-width="1.5" stroke-opacity="0.8" stroke-linecap="round"  d="M532.6,424.4C533.8,425.0 537.0,427.1 540.0,428.0C543.0,428.9 545.0,428.6 550.4,429.6C555.8,430.6 565.9,431.8 572.6,434.0C579.3,436.2 585.5,440.0 590.4,443.0C595.3,446.0 598.6,448.6 602.0,452.0C605.4,455.4 609.5,461.8 611.0,463.7"/>
<path fill="none" stroke="#5cb4ff" stroke-width="1.4" stroke-opacity="0.7" stroke-linecap="round"  d="M463.7,485.0C465.2,484.5 469.7,482.8 473.0,482.0C476.3,481.2 477.0,481.3 483.7,480.0C490.4,478.7 503.1,475.0 513.0,474.0C522.9,473.0 534.3,473.2 543.0,474.0C551.7,474.8 560.3,477.5 565.0,478.5C569.7,479.5 570.0,479.8 571.0,480.0"/>
<path fill="url(#C6)"  d="M409.6,480.7C414.5,480.9 429.1,480.9 439.0,482.0C448.9,483.1 459.1,485.0 469.0,487.4C478.9,489.8 489.9,493.4 498.5,496.3C507.1,499.2 513.8,502.3 520.7,505.0C527.6,507.7 535.8,510.3 540.0,512.6C544.2,514.9 545.0,517.9 546.0,519.0L546.0,519.0C547.0,523.5 556.3,539.2 552.0,546.0C547.7,552.8 545.5,561.8 520.0,560.0C494.5,558.2 419.2,539.2 399.0,535.0L399.0,535.0C397.3,533.5 391.6,529.7 389.0,526.0C386.4,522.3 384.2,516.8 383.7,512.6C383.2,508.4 384.1,504.6 386.0,500.7C387.9,496.8 390.9,492.3 394.8,489.0C398.7,485.7 407.1,482.1 409.6,480.7Z"/>
<path fill="none" stroke="#5cb4ff" stroke-width="1.4" stroke-opacity="0.6" stroke-linecap="round"  d="M409.6,480.7C414.5,480.9 429.1,480.9 439.0,482.0C448.9,483.1 459.1,485.0 469.0,487.4C478.9,489.8 489.9,493.4 498.5,496.3C507.1,499.2 513.8,502.3 520.7,505.0C527.6,507.7 535.8,510.3 540.0,512.6C544.2,514.9 545.0,517.9 546.0,519.0"/>
<path fill="url(#C5)"  d="M716.0,443.0C710.1,443.8 693.4,445.3 680.7,448.0C668.0,450.7 651.9,456.2 640.0,459.0C628.1,461.8 618.4,463.0 609.6,465.0C600.8,467.0 593.8,468.8 587.4,471.0C581.0,473.2 575.9,476.0 571.0,478.5C566.1,481.0 561.7,482.3 557.8,486.0C553.9,489.7 549.6,495.3 547.4,500.7C545.2,506.1 544.4,512.6 544.4,518.5C544.4,524.4 546.4,531.6 547.4,536.0C548.4,540.4 549.9,543.5 550.4,545.0L550.4,545.0C558.7,554.2 565.1,590.8 600.0,600.0C634.9,609.2 733.3,626.7 760.0,600.0C786.7,573.3 760.0,466.7 760.0,440.0Z"/>
<path fill="none" stroke="#7ed0ff" stroke-width="1.7" stroke-opacity="0.8" stroke-linecap="round"  d="M716.0,443.0C710.1,443.8 693.4,445.3 680.7,448.0C668.0,450.7 651.9,456.2 640.0,459.0C628.1,461.8 618.4,463.0 609.6,465.0C600.8,467.0 593.8,468.8 587.4,471.0C581.0,473.2 575.9,476.0 571.0,478.5C566.1,481.0 561.7,482.3 557.8,486.0C553.9,489.7 549.6,495.3 547.4,500.7C545.2,506.1 544.4,512.6 544.4,518.5C544.4,524.4 546.4,531.6 547.4,536.0C548.4,540.4 549.9,543.5 550.4,545.0"/>
<path fill="#5ab8fe"  d="M674.0,451.0C676.7,449.3 683.0,444.8 690.0,441.0C697.0,437.2 711.7,430.2 716.0,428.0L716.0,443.0C711.7,443.7 697.0,445.7 690.0,447.0C683.0,448.3 676.7,450.3 674.0,451.0Z"/>
<path fill="url(#C2o)"  d="M320.0,664.0C323.0,665.3 331.3,670.2 338.0,672.0C344.7,673.8 350.5,675.3 360.0,675.0C369.5,674.7 382.5,672.5 395.0,670.0C407.5,667.5 422.5,663.7 435.0,660.0C447.5,656.3 457.5,652.7 470.0,648.0C482.5,643.3 496.7,637.8 510.0,632.0C523.3,626.2 537.5,619.0 550.0,613.0C562.5,607.0 575.0,600.7 585.0,596.0C595.0,591.3 601.7,588.2 610.0,585.0C618.3,581.8 626.7,579.0 635.0,577.0C643.3,575.0 651.7,573.8 660.0,573.0C668.3,572.2 675.7,571.8 685.0,572.0C694.3,572.2 710.8,573.7 716.0,574.0L716.0,574.0C723.3,574.0 752.7,536.3 760.0,574.0C767.3,611.7 821.5,764.7 760.0,800.0C698.5,835.3 452.5,788.3 391.0,786.0L391.0,786.0C390.2,784.7 388.5,781.8 386.0,778.0C383.5,774.2 379.5,768.3 376.0,763.0C372.5,757.7 368.8,752.0 365.0,746.0C361.2,740.0 356.8,733.3 353.0,727.0C349.2,720.7 345.2,713.5 342.0,708.0C338.8,702.5 336.5,698.5 334.0,694.0C331.5,689.5 328.8,684.7 327.0,681.0C325.2,677.3 324.2,675.0 323.0,672.0C321.8,669.0 320.5,664.5 320.0,663.0Z"/>
<path fill="url(#C2i)"  d="M412.0,566.0C409.2,568.7 401.7,576.0 395.0,582.0C388.3,588.0 379.2,596.0 372.0,602.0C364.8,608.0 358.2,612.7 352.0,618.0C345.8,623.3 339.7,628.7 335.0,634.0C330.3,639.3 326.5,645.0 324.0,650.0C321.5,655.0 320.7,661.7 320.0,664.0L320.0,664.0C323.0,665.3 331.3,670.2 338.0,672.0C344.7,673.8 350.5,675.3 360.0,675.0C369.5,674.7 382.5,672.5 395.0,670.0C407.5,667.5 422.5,663.7 435.0,660.0C447.5,656.3 464.2,650.0 470.0,648.0L470.0,648.0L457.0,652.5L457.0,652.5L410.0,566.0Z"/>
<path fill="none" stroke="#68beff" stroke-width="2" stroke-opacity="0.85" stroke-linecap="round"  d="M320.0,664.0C323.0,665.3 331.3,670.2 338.0,672.0C344.7,673.8 350.5,675.3 360.0,675.0C369.5,674.7 382.5,672.5 395.0,670.0C407.5,667.5 422.5,663.7 435.0,660.0C447.5,656.3 457.5,652.7 470.0,648.0C482.5,643.3 496.7,637.8 510.0,632.0C523.3,626.2 537.5,619.0 550.0,613.0C562.5,607.0 575.0,600.7 585.0,596.0C595.0,591.3 601.7,588.2 610.0,585.0C618.3,581.8 626.7,579.0 635.0,577.0C643.3,575.0 651.7,573.8 660.0,573.0C668.3,572.2 675.7,571.8 685.0,572.0C694.3,572.2 710.8,573.7 716.0,574.0"/>
<path fill="url(#C1)"  d="M389.0,526.0C390.7,527.5 395.6,532.5 399.0,535.0C402.4,537.5 402.9,538.3 409.6,540.7C416.3,543.1 429.1,547.6 439.0,549.6C448.9,551.6 459.1,552.3 469.0,553.0C478.9,553.7 488.7,554.3 498.5,554.0C508.3,553.7 518.1,552.5 528.0,551.0C537.9,549.5 547.9,547.5 557.8,545.0C567.7,542.5 577.5,539.2 587.4,536.0C597.3,532.8 608.2,528.9 617.0,526.0C625.8,523.1 629.5,521.5 640.0,518.5C650.5,515.5 667.3,511.1 680.0,508.0C692.7,504.9 710.0,501.3 716.0,500.0L716.0,500.0L760.0,500.0L760.0,574.0L716.0,574.0L716.0,574.0C710.8,573.7 694.3,572.2 685.0,572.0C675.7,571.8 668.3,572.2 660.0,573.0C651.7,573.8 643.3,575.0 635.0,577.0C626.7,579.0 618.3,581.8 610.0,585.0C601.7,588.2 595.0,591.3 585.0,596.0C575.0,600.7 562.5,607.0 550.0,613.0C537.5,619.0 523.3,626.2 510.0,632.0C496.7,637.8 476.7,645.3 470.0,648.0L470.0,648.0L457.0,652.5L457.0,652.5L389.0,526.0Z"/>
<path fill="none" stroke="#84d4ff" stroke-width="1.8" stroke-opacity="0.85" stroke-linecap="round"  d="M389.0,526.0C390.7,527.5 395.6,532.5 399.0,535.0C402.4,537.5 402.9,538.3 409.6,540.7C416.3,543.1 429.1,547.6 439.0,549.6C448.9,551.6 459.1,552.3 469.0,553.0C478.9,553.7 488.7,554.3 498.5,554.0C508.3,553.7 518.1,552.5 528.0,551.0C537.9,549.5 547.9,547.5 557.8,545.0C567.7,542.5 577.5,539.2 587.4,536.0C597.3,532.8 608.2,528.9 617.0,526.0C625.8,523.1 629.5,521.5 640.0,518.5C650.5,515.5 667.3,511.1 680.0,508.0C692.7,504.9 710.0,501.3 716.0,500.0"/>
<path fill="url(#D0)"  d="M391.0,786.0C394.5,783.2 404.7,774.7 412.0,769.0C419.3,763.3 427.0,757.0 435.0,752.0C443.0,747.0 451.7,743.2 460.0,739.0C468.3,734.8 476.7,730.5 485.0,727.0C493.3,723.5 501.7,720.8 510.0,718.0C518.3,715.2 526.7,712.3 535.0,710.0C543.3,707.7 551.7,705.5 560.0,704.0C568.3,702.5 576.7,701.5 585.0,701.0C593.3,700.5 601.7,700.3 610.0,701.0C618.3,701.7 627.5,703.5 635.0,705.0C642.5,706.5 648.8,708.0 655.0,710.0C661.2,712.0 665.8,713.8 672.0,717.0C678.2,720.2 685.7,724.3 692.0,729.0C698.3,733.7 704.9,738.8 710.0,745.0C715.1,751.2 717.5,756.4 722.5,766.0C727.5,775.6 737.1,796.4 740.0,802.5L740.0,802.5C740.8,840.9 809.7,994.6 745.0,1033.0C680.3,1071.4 417.5,1033.0 352.0,1033.0L352.0,1033.0C350.0,1030.7 344.2,1023.7 340.0,1019.0C335.8,1014.3 331.5,1010.0 327.0,1005.0C322.5,1000.0 317.5,994.5 313.0,989.0C308.5,983.5 303.8,977.5 300.0,972.0C296.2,966.5 293.0,961.3 290.0,956.0C287.0,950.7 284.0,945.2 282.0,940.0C280.0,934.8 278.8,930.0 278.0,925.0C277.2,920.0 276.8,914.5 277.0,910.0C277.2,905.5 277.7,902.2 279.0,898.0C280.3,893.8 282.2,889.8 285.0,885.0C287.8,880.2 291.8,874.5 296.0,869.0C300.2,863.5 304.7,857.8 310.0,852.0C315.3,846.2 321.8,839.8 328.0,834.0C334.2,828.2 340.3,822.3 347.0,817.0C353.7,811.7 360.7,807.2 368.0,802.0C375.3,796.8 387.2,788.7 391.0,786.0Z"/>
<path fill="url(#D1)" filter="url(#bl8)" d="M745.0,850.0C742.5,844.2 734.8,825.0 730.0,815.0C725.2,805.0 719.8,798.2 716.0,790.0C712.2,781.8 710.2,772.3 707.5,766.0C704.8,759.7 703.8,756.8 700.0,752.0C696.2,747.2 691.3,741.5 685.0,737.0C678.7,732.5 670.3,728.0 662.0,725.0C653.7,722.0 645.3,720.7 635.0,719.0C624.7,717.3 612.5,715.2 600.0,715.0C587.5,714.8 573.3,715.7 560.0,718.0C546.7,720.3 532.5,724.8 520.0,729.0C507.5,733.2 495.8,737.8 485.0,743.0C474.2,748.2 465.7,752.8 455.0,760.0C444.3,767.2 426.7,781.7 421.0,786.0L421.0,786.0C416.5,789.2 402.5,798.7 394.0,805.0C385.5,811.3 377.7,817.5 370.0,824.0C362.3,830.5 354.5,837.8 348.0,844.0C341.5,850.2 336.2,855.2 331.0,861.0C325.8,866.8 320.7,873.3 317.0,879.0C313.3,884.7 311.0,889.7 309.0,895.0C307.0,900.3 305.3,905.5 305.0,911.0C304.7,916.5 305.7,922.7 307.0,928.0C308.3,933.3 310.5,937.8 313.0,943.0C315.5,948.2 318.7,953.7 322.0,959.0C325.3,964.3 329.0,969.7 333.0,975.0C337.0,980.3 341.3,985.5 346.0,991.0C350.7,996.5 356.2,1002.8 361.0,1008.0C365.8,1013.2 371.2,1017.8 375.0,1022.0C378.8,1026.2 382.5,1031.2 384.0,1033.0L384.0,1033.0L745.0,1033.0Z"/>
<path fill="none" stroke="#62c2ff" stroke-width="2" stroke-opacity="0.85" stroke-linecap="round"  d="M391.0,786.0C394.5,783.2 404.7,774.7 412.0,769.0C419.3,763.3 427.0,757.0 435.0,752.0C443.0,747.0 451.7,743.2 460.0,739.0C468.3,734.8 476.7,730.5 485.0,727.0C493.3,723.5 501.7,720.8 510.0,718.0C518.3,715.2 526.7,712.3 535.0,710.0C543.3,707.7 551.7,705.5 560.0,704.0C568.3,702.5 576.7,701.5 585.0,701.0C593.3,700.5 601.7,700.3 610.0,701.0C618.3,701.7 627.5,703.5 635.0,705.0C642.5,706.5 648.8,708.0 655.0,710.0C661.2,712.0 665.8,713.8 672.0,717.0C678.2,720.2 685.7,724.3 692.0,729.0C698.3,733.7 707.0,742.3 710.0,745.0"/>
<path fill="none" stroke="#4ab4ff" stroke-width="1.4" stroke-opacity="0.5" stroke-linecap="round"  d="M391.0,786.0C387.2,788.7 375.3,796.8 368.0,802.0C360.7,807.2 353.7,811.7 347.0,817.0C340.3,822.3 334.2,828.2 328.0,834.0C321.8,839.8 315.3,846.2 310.0,852.0C304.7,857.8 300.2,863.5 296.0,869.0C291.8,874.5 287.8,880.2 285.0,885.0C282.2,889.8 280.3,893.8 279.0,898.0C277.7,902.2 277.2,905.5 277.0,910.0C276.8,914.5 277.2,920.0 278.0,925.0C278.8,930.0 280.0,934.8 282.0,940.0C284.0,945.2 287.0,950.7 290.0,956.0C293.0,961.3 296.2,966.5 300.0,972.0C303.8,977.5 308.5,983.5 313.0,989.0C317.5,994.5 322.5,1000.0 327.0,1005.0C331.5,1010.0 335.8,1014.3 340.0,1019.0C344.2,1023.7 350.0,1030.7 352.0,1033.0"/>
<path fill="none" stroke="#4aa8fc" stroke-width="1.6" stroke-opacity="0.7" stroke-linecap="round"  d="M600.0,712.0C605.8,712.7 624.7,714.0 635.0,716.0C645.3,718.0 653.7,720.5 662.0,724.0C670.3,727.5 678.7,732.3 685.0,737.0C691.3,741.7 696.2,747.2 700.0,752.0C703.8,756.8 703.8,757.6 707.5,766.0C711.2,774.4 720.0,796.4 722.5,802.5"/>
<path fill="url(#Dc)"  d="M583.0,1033.0C582.2,1029.3 580.5,1018.5 578.5,1010.8C576.5,1003.1 573.4,996.7 571.0,986.7C568.6,976.7 565.5,961.9 564.0,950.6C562.5,939.3 561.9,929.1 561.7,919.0C561.5,908.9 561.5,898.8 563.0,890.0C564.5,881.2 566.8,874.0 571.0,866.0C575.2,858.0 581.2,848.8 588.0,842.0C594.8,835.2 603.2,830.2 612.0,825.0C620.8,819.8 633.0,814.2 641.0,811.0C649.0,807.8 656.8,806.8 660.0,806.0L670.0,825.0C670.8,829.1 673.0,840.7 675.0,849.5C677.0,858.3 680.0,869.6 682.0,878.0C684.0,886.4 684.7,894.2 687.0,900.0C689.3,905.8 692.4,909.0 696.0,913.0C699.6,917.0 703.6,919.8 708.6,924.0C713.6,928.2 720.0,933.2 726.0,938.0C732.0,942.8 739.4,948.2 744.7,953.0C750.0,957.8 753.6,962.2 758.0,967.0C762.4,971.8 767.2,977.2 771.0,982.0C774.8,986.8 777.8,991.2 781.0,996.0C784.2,1000.8 787.2,1004.6 790.4,1010.8C793.6,1017.0 798.4,1029.3 800.0,1033.0L800.0,1033.0L583.0,1033.0Z"/>
<path fill="none" stroke="#0528a0" stroke-width="10" stroke-opacity="0.8" stroke-linecap="round" filter="url(#bl3)" d="M682.0,830.0C683.0,833.7 686.7,845.0 688.0,852.0C689.3,859.0 690.2,865.3 690.0,872.0C689.8,878.7 687.5,888.7 687.0,892.0"/>
<path fill="url(#Dw)"  d="M722.5,802.5C725.4,808.8 733.8,827.5 740.0,840.0C746.2,852.5 753.8,864.2 760.0,877.5C766.2,890.8 771.7,905.4 777.5,920.0C783.3,934.6 789.6,951.2 795.0,965.0C800.4,978.8 805.8,991.2 810.0,1002.5C814.2,1013.8 818.3,1027.9 820.0,1033.0L800.0,1033.0L800.0,1033.0C798.4,1029.3 793.6,1017.0 790.4,1010.8C787.2,1004.6 784.2,1000.8 781.0,996.0C777.8,991.2 774.8,986.8 771.0,982.0C767.2,977.2 762.4,971.8 758.0,967.0C753.6,962.2 750.0,957.8 744.7,953.0C739.4,948.2 732.0,942.8 726.0,938.0C720.0,933.2 713.6,928.2 708.6,924.0C703.6,919.8 698.1,914.8 696.0,913.0L689.0,888.0C690.8,883.7 696.2,870.3 700.0,862.0C703.8,853.7 708.2,846.0 712.0,838.0C715.8,830.0 721.2,819.9 723.0,814.0C724.8,808.1 722.6,804.4 722.5,802.5Z"/>
<path fill="url(#Dr1)"  d="M583.0,1033.0C583.5,1025.3 583.6,999.2 585.7,986.7C587.8,974.2 591.0,965.8 595.4,957.8C599.8,949.8 604.4,943.4 612.0,938.6C619.6,933.8 630.5,930.3 641.0,929.0C651.5,927.7 663.7,928.7 675.0,931.0C686.3,933.3 697.0,936.5 708.6,943.0C720.2,949.5 734.7,960.7 744.7,970.0C754.7,979.3 762.4,988.2 768.8,998.7C775.2,1009.2 780.6,1027.3 783.0,1033.0Z"/>
<path fill="url(#Dr2)"  d="M624.0,1033.0C624.5,1027.3 624.7,1008.0 626.7,998.7C628.7,989.4 631.2,983.0 636.0,977.0C640.8,971.0 647.5,965.8 655.6,962.6C663.7,959.4 673.7,956.6 684.5,957.8C695.3,959.0 709.4,964.0 720.6,970.0C731.9,976.0 744.0,986.4 752.0,994.0C760.0,1001.6 764.8,1009.1 768.8,1015.6C772.8,1022.1 774.8,1030.1 776.0,1033.0Z"/>
<path fill="url(#Dr3)"  d="M641.0,1033.0C641.4,1027.3 641.5,1007.2 643.5,998.7C645.5,990.2 647.8,986.8 653.0,982.0C658.2,977.2 665.7,972.0 675.0,970.0C684.3,968.0 698.2,967.2 708.6,970.0C719.0,972.8 729.4,979.9 737.4,986.7C745.4,993.5 752.3,1003.1 756.7,1010.8C761.1,1018.5 762.8,1029.3 764.0,1033.0Z"/>
<path fill="none" stroke="#58b8ff" stroke-width="1.5" stroke-opacity="0.8" stroke-linecap="round"  d="M583.0,1033.0C583.5,1025.3 583.6,999.2 585.7,986.7C587.8,974.2 591.0,965.8 595.4,957.8C599.8,949.8 604.4,943.4 612.0,938.6C619.6,933.8 630.5,930.3 641.0,929.0C651.5,927.7 663.7,928.7 675.0,931.0C686.3,933.3 697.0,936.5 708.6,943.0C720.2,949.5 734.7,960.7 744.7,970.0C754.7,979.3 762.4,988.2 768.8,998.7C775.2,1009.2 780.6,1027.3 783.0,1033.0"/>
<path fill="none" stroke="#4aa8fc" stroke-width="1.3" stroke-opacity="0.7" stroke-linecap="round"  d="M624.0,1033.0C624.5,1027.3 624.7,1008.0 626.7,998.7C628.7,989.4 631.2,983.0 636.0,977.0C640.8,971.0 647.5,965.8 655.6,962.6C663.7,959.4 673.7,956.6 684.5,957.8C695.3,959.0 709.4,964.0 720.6,970.0C731.9,976.0 744.0,986.4 752.0,994.0C760.0,1001.6 764.8,1009.1 768.8,1015.6C772.8,1022.1 774.8,1030.1 776.0,1033.0"/>
<path fill="none" stroke="#3a94f6" stroke-width="1.2" stroke-opacity="0.6" stroke-linecap="round"  d="M641.0,1033.0C641.4,1027.3 641.5,1007.2 643.5,998.7C645.5,990.2 647.8,986.8 653.0,982.0C658.2,977.2 665.7,972.0 675.0,970.0C684.3,968.0 698.2,967.2 708.6,970.0C719.0,972.8 729.4,979.9 737.4,986.7C745.4,993.5 752.3,1003.1 756.7,1010.8C761.1,1018.5 762.8,1029.3 764.0,1033.0"/>
</svg>

<div id="win"></div>
<div id="wc">
<!-- title bar -->
<svg class="abs" style="left:728px;top:186px" width="17" height="18" viewBox="0 0 17 18"><path d="M1.2,1.2 L15.6,8.6 L8.2,11.2 L4.6,17 Z" fill="#f58220"/><path d="M8.2,11.2 L15.6,8.6 L6.2,9.4 Z" fill="#d9640f"/></svg>
<div class="t" id="ttl" style="left:752px;top:189px;font-size:13px;line-height:16px;color:#444;letter-spacing:0.08px">Auto Clicker</div>
<div class="t" id="pro" style="left:832px;top:190px;width:26px;height:13px;background:#e0682b;border-radius:3px;color:#fff;font-size:9px;line-height:13px;text-align:center;font-weight:700;letter-spacing:-.3px">PRO</div>
<svg class="abs" style="left:1160px;top:184px" width="116" height="18" viewBox="0 0 116 18" fill="none" stroke="#444" stroke-width="1"><path d="M6,8.5H16"/><rect x="52.5" y="4.5" width="9" height="9" rx="1"/><path d="M98,4 L108,14 M108,4 L98,14"/></svg>
<!-- tabs -->
<div class="abs" style="left:728px;top:221px;width:170px;height:31px;border:1px solid #dfe3ec;border-radius:5px;background:#eef1f7"></div>
<div class="abs" style="left:729px;top:222px;width:84px;height:29px;border-radius:4px;background:#fbfcfe;box-shadow:0 0 2px rgba(0,0,0,.08)"></div>
<div class="t" id="tab1" style="left:752px;top:230px;font-size:12px;line-height:16px;font-weight:700;color:#111;letter-spacing:-0.01px">TIMER</div>
<div class="t" id="tab2" style="left:835px;top:230px;font-size:12px;line-height:16px;color:#555;letter-spacing:-0.67px">SCRIPT</div>
<!-- top-right buttons -->
<div class="btn" style="left:1181px;top:229px;width:23px;height:23px;background:#f3f5fa"></div>
<div class="btn" style="left:1212px;top:229px;width:23px;height:23px;background:#f3f5fa"></div>
<div class="btn" style="left:1243px;top:229px;width:23px;height:23px;background:#f3f5fa"></div>
<svg class="abs" style="left:1185px;top:233px" width="15" height="15" viewBox="0 0 24 24" fill="none" stroke="#555" stroke-width="1.7"><circle cx="12" cy="12" r="3.2"/><path d="M10.3,2.8h3.4l.6,2.7 2,1.1 2.6-.9 1.7,2.9-2,1.9v2.4l2,1.9-1.7,2.9-2.6-.9-2,1.1-.6,2.7h-3.4l-.6-2.7-2-1.1-2.6.9-1.7-2.9 2-1.9v-2.4l-2-1.9 1.700-2.9 2.6.9 2-1.1z" stroke-linejoin="round"/></svg>
<svg class="abs" style="left:1217px;top:238px" width="13" height="5" viewBox="0 0 13 5" fill="#555"><circle cx="2" cy="2.5" r="1"/><circle cx="6.500" cy="2.5" r="1"/><circle cx="11" cy="2.5" r="1"/></svg>
<svg class="abs" style="left:1247px;top:233px" width="15" height="15" viewBox="0 0 15 15" fill="none" stroke="#555" stroke-width="1.1" stroke-linejoin="round"><path d="M9.200,1.500 L13.500,5.800 L12,6.400 L9.800,8.600 L9.400,11.500 L3.500,5.600 L6.400,5.200 L8.600,3 Z M6.300,8.700 L1.600,13.400"/></svg>

<!-- TIME INTERVAL card -->
<div class="card" style="left:728px;top:268px;width:334px;height:160px"></div>
<div class="lbl" id="l_ti" style="left:741px;top:281px;line-height:14px;word-spacing:1.500px;letter-spacing:-0.48px">TIME INTERVAL</div>
<div class="lbl" id="l_cps" style="left:824px;top:281px;line-height:14px;color:#d4652b;letter-spacing:-0.36px">[CPS: 60]</div>
<div class="btn" style="left:1028px;top:277px;width:21px;height:21px"></div>
<svg class="abs" style="left:1032px;top:281px" width="13" height="13" viewBox="0 0 13 13" fill="none" stroke="#a8a8a8" stroke-width="1"><circle cx="6.500" cy="6.500" r="5.2"/><path d="M6.500,5.500V9.300M6.500,3.600V4.400"/></svg>
<div class="num" style="left:741px;top:311px;width:44px;height:43px;line-height:42px">0</div>
<div class="num" style="left:793px;top:311px;width:44px;height:43px;line-height:42px">0</div>
<div class="num" style="left:845px;top:311px;width:44px;height:43px;line-height:42px">0</div>
<div class="num" style="left:897px;top:311px;width:44px;height:43px;line-height:42px">16</div>
<div class="t" style="left:947px;top:322px;width:14px;text-align:center;font-size:16px;line-height:20px;color:#bbb">±</div>
<div class="num" style="left:968px;top:315px;width:36px;height:35px;line-height:34px">0</div>
<div class="unit" style="left:743px;top:358px;line-height:16px">h</div>
<div class="unit" style="left:795px;top:358px;line-height:16px">m</div>
<div class="unit" style="left:847px;top:358px;line-height:16px">s</div>
<div class="unit" style="left:899px;top:358px;line-height:16px">ms</div>
<div class="unit" style="left:966px;top:354px;line-height:16px">ms</div>
<div class="num" style="left:741px;top:393px;width:17px;height:23px;line-height:22px;font-size:12px;color:#666">0</div>
<div class="num" style="left:1010px;top:393px;width:39px;height:23px;line-height:22px;font-size:12px;color:#666">1000</div>
<svg class="abs" style="left:764px;top:394px" width="242" height="18" viewBox="0 0 242 18"><path d="M4,9H13" stroke="#3b3fc4" stroke-width="3.200" stroke-linecap="round"/><path d="M15.500,7.500V10.500" stroke="#3b3fc4" stroke-width="1.500"/><path d="M36,9H236" stroke="#8e8e8e" stroke-width="3" stroke-linecap="round" stroke-dasharray="17.500 3"/><circle cx="25" cy="9" r="8" fill="#fdfdff" stroke="#e3e5ec" stroke-width="1"/><circle cx="25" cy="9" r="4.800" fill="#3b3fc4"/></svg>

<!-- MOUSE card -->
<div class="card" style="left:728px;top:440px;width:210px;height:82px"></div>
<svg class="abs" style="left:741.500px;top:455px" width="13" height="17" viewBox="0 0 13 17" fill="none" stroke="#666" stroke-width="1.100"><rect x="2.200" y="1.500" width="8.600" height="14" rx="4.300"/><path d="M6.500,3.500V7"/></svg>
<div class="abs" style="left:760px;top:449px;width:28px;height:28px;border-radius:4px;background:#3b3fc4"></div>
<div class="t" style="left:760px;top:449px;width:28px;text-align:center;line-height:31px;font-size:13px;font-weight:700;color:#fff">L</div>
<div class="btn" style="left:790px;top:450px;width:27px;height:27px"></div>
<div class="t" style="left:790px;top:450px;width:27px;text-align:center;line-height:30px;font-size:13px;font-weight:700;color:#1a1a1a">M</div>
<div class="btn" style="left:820px;top:450px;width:27px;height:27px"></div>
<div class="t" style="left:820px;top:450px;width:27px;text-align:center;line-height:30px;font-size:13px;font-weight:700;color:#1a1a1a">R</div>
<div class="btn" style="left:904px;top:449px;width:21px;height:21px"></div>
<svg class="abs" style="left:908px;top:453px" width="13" height="13" viewBox="0 0 13 13" fill="none" stroke="#a8a8a8" stroke-width="1"><circle cx="6.500" cy="6.500" r="5.200"/><path d="M6.500,5.500V9.300M6.500,3.600V4.400"/></svg>
<svg class="abs" style="left:741px;top:495px" width="16" height="12" viewBox="0 0 16 12" fill="none" stroke="#666" stroke-width="1"><rect x=".8" y="1" width="14.400" height="10" rx="1.500"/><path d="M3,4H4M6,4H7M9,4H10M12,4H13M3,6.300H4M6,6.300H7M9,6.300H10M12,6.300H13M4.500,8.700H11.500"/></svg>
<div class="btn" style="left:764px;top:490px;width:32px;height:23px"></div>
<div class="t" id="ctrl" style="left:764px;top:490px;width:32px;text-align:center;line-height:22px;font-size:12px;color:#222;letter-spacing:-0.37px">Ctrl</div>
<div class="btn" style="left:800px;top:490px;width:22px;height:23px"></div>
<div class="t" style="left:800px;top:490px;width:22px;text-align:center;line-height:22px;font-size:12px;color:#111">A</div>
<div class="btn" style="left:830px;top:491px;width:21px;height:21px"></div>
<svg class="abs" style="left:834px;top:495px" width="13" height="13" viewBox="0 0 13 13" stroke="#555" stroke-width="1"><path d="M6.500,1.500V11.500M1.500,6.500H11.500"/></svg>
<div class="btn" style="left:855px;top:491px;width:21px;height:21px"></div>
<svg class="abs" style="left:859px;top:494px" width="13" height="15" viewBox="0 0 13 15" fill="none" stroke="#444" stroke-width="1.100"><path d="M1.500,3.500H11.500M4.500,3.300V2H8.500V3.300M2.700,3.700L3.400,12.800H9.600L10.300,3.700M5.300,6V10.500M7.700,6V10.500"/></svg>

<!-- EVENT TYPE card -->
<div class="card" style="left:947px;top:440px;width:115px;height:82px"></div>
<div class="lbl" id="l_et" style="left:959px;top:453px;line-height:14px;word-spacing:1.500px;letter-spacing:-0.85px">EVENT TYPE</div>
<div class="btn" style="left:1028px;top:449px;width:21px;height:21px"></div>
<svg class="abs" style="left:1032px;top:453px" width="13" height="13" viewBox="0 0 13 13" fill="none" stroke="#a8a8a8" stroke-width="1"><circle cx="6.500" cy="6.500" r="5.200"/><path d="M6.500,5.500V9.300M6.500,3.600V4.400"/></svg>
<div class="btn" style="left:959px;top:478px;width:80px;height:32px;background:#fff"></div>
<div class="t" id="hold" style="left:971px;top:485px;font-size:14px;line-height:18px;color:#222;letter-spacing:0.12px">Hold</div>
<svg class="abs" style="left:1013px;top:490px" width="11" height="8" viewBox="0 0 11 8" fill="none" stroke="#444" stroke-width="1.100"><path d="M1.500,2 L5.500,6 L9.500,2"/></svg>

<!-- REPEAT card -->
<div class="card" style="left:728px;top:535px;width:334px;height:125px"></div>
<div class="lbl" id="l_rd" style="left:741px;top:544px;line-height:14px;word-spacing:1.500px;letter-spacing:-0.57px">REPEAT | DURATION</div>
<div class="abs" style="left:1019px;top:543px;width:30px;height:20px;border-radius:10px;background:#f6f7fb;border:1px solid #e3e5ec"></div>
<div class="abs" style="left:1023px;top:547px;width:12px;height:12px;border-radius:6px;background:#555"></div>
<div class="abs" style="left:741px;top:577px;width:20px;height:20px;border-radius:10px;border:3px solid #c4c4c4;background:#fff"></div>
<div class="num" style="left:769px;top:576px;width:64px;height:23px;background:#f8f9fc;text-align:left;padding-left:4px;font-size:13px;line-height:23px;color:#aaa">0</div>
<div class="btn" style="left:841px;top:576px;width:98px;height:23px;background:#f8f9fc"></div>
<div class="t" id="secs" style="left:853px;top:579px;font-size:13px;line-height:17px;color:#999;letter-spacing:-0.46px">Seconds</div>
<svg class="abs" style="left:913px;top:583px" width="11" height="8" viewBox="0 0 11 8" fill="none" stroke="#888" stroke-width="1.100"><path d="M1.500,2 L5.500,6 L9.500,2"/></svg>
<div class="abs" style="left:741px;top:613px;width:20px;height:20px;border-radius:10px;border:1px solid #bdbdbd;background:#fdfdff"></div>
<div class="num" style="left:769px;top:612px;width:64px;height:23px;background:#f8f9fc;text-align:left;padding-left:4px;font-size:13px;line-height:23px;color:#aaa">0</div>
<div class="t" id="times" style="left:841px;top:615px;font-size:13px;line-height:17px;color:#444;letter-spacing:-0.11px">times</div>

<!-- LOCATIONS card -->
<div class="card" style="left:1075px;top:268px;width:199px;height:412px"></div>
<div class="lbl" id="l_loc" style="left:1145px;top:285px;line-height:14px;color:#444;letter-spacing:-0.39px">LOCATIONS</div>
<div class="abs" style="left:1227px;top:281px;width:30px;height:20px;border-radius:10px;background:#3b3fc4"></div>
<div class="abs" style="left:1242px;top:285px;width:12px;height:12px;border-radius:6px;background:#fff"></div>
<div class="abs" style="left:1091px;top:309px;width:166px;height:326px;border:1px solid #eaedf3;border-radius:5px;background:#fcfdff"></div>
<div class="btn loc" style="left:1100px;top:314px;width:148px;height:25px;background:#fff"></div>
<div class="btn loc" style="left:1100px;top:343px;width:148px;height:25px;background:#fff"></div>
<div class="btn loc" style="left:1100px;top:372px;width:148px;height:25px;background:#fff"></div>
<div class="t lx" style="left:1108px;top:321px;color:#999">X</div><div class="t lx" style="left:1122px;top:321px">371</div><div class="t lx" style="left:1145px;top:321px;color:#999">Y</div><div class="t lx" style="left:1159px;top:321px">381</div>
<div class="t lx" style="left:1108px;top:350px;color:#999">X</div><div class="t lx" style="left:1122px;top:350px">661</div><div class="t lx" style="left:1145px;top:350px;color:#999">Y</div><div class="t lx" style="left:1159px;top:350px">646</div>
<div class="t lx" style="left:1108px;top:379px;color:#999">X</div><div class="t lx" style="left:1122px;top:379px">1795</div><div class="t lx" style="left:1151px;top:379px;color:#999">Y</div><div class="t lx" style="left:1165px;top:379px">650</div>
<svg class="abs" style="left:1204px;top:321px" width="13" height="70" viewBox="0 0 13 70" fill="none" stroke="#aaa" stroke-width="1"><g><path d="M1,7.500C2,4.300 4,3 6.500,3S11,4.300 12,7.500"/><circle cx="6.500" cy="7" r="2"/></g><g transform="translate(0 29)"><path d="M1,7.500C2,4.300 4,3 6.500,3S11,4.300 12,7.500"/><circle cx="6.500" cy="7" r="2"/></g><g transform="translate(0 58)"><path d="M1,7.500C2,4.300 4,3 6.500,3S11,4.300 12,7.500"/><circle cx="6.500" cy="7" r="2"/></g></svg>
<svg class="abs" style="left:1227px;top:320px" width="12" height="72" viewBox="0 0 12 72" fill="none" stroke="#999" stroke-width="1"><g><path d="M1,2.500H11M4,2.300V1H8V2.300M2.200,2.700L2.900,11.500H9.100L9.800,2.700M4.800,5V9.500M7.200,5V9.500"/></g><g transform="translate(0 29)"><path d="M1,2.500H11M4,2.300V1H8V2.300M2.200,2.700L2.900,11.500H9.100L9.800,2.700M4.800,5V9.500M7.200,5V9.500"/></g><g transform="translate(0 58)"><path d="M1,2.500H11M4,2.300V1H8V2.300M2.200,2.700L2.900,11.500H9.100L9.800,2.700M4.800,5V9.500M7.200,5V9.500"/></g></svg>
<div class="btn" style="left:1205px;top:644px;width:23px;height:23px"></div>
<svg class="abs" style="left:1210px;top:649px" width="13" height="13" viewBox="0 0 13 13" fill="none" stroke="#666" stroke-width="1.100"><circle cx="5.500" cy="5.500" r="3.600"/><path d="M8.200,8.200L11.500,11.500"/></svg>
<div class="btn" style="left:1233px;top:644px;width:23px;height:23px"></div>
<svg class="abs" style="left:1238px;top:649px" width="13" height="13" viewBox="0 0 13 13" stroke="#666" stroke-width="1"><path d="M6.500,1.500V11.500M1.500,6.500H11.500"/></svg>

<!-- START -->
<div class="abs" style="left:728px;top:700px;width:546px;height:41px;border-radius:4px;background:#3d40c6;box-shadow:0 1px 0 #2a2c96"></div>
<svg class="abs" style="left:959px;top:713px" width="14" height="15" viewBox="0 0 14 15"><path d="M1.500,1.800V13.200a.8.8 0 0 0 1.200.7L12.300,8.200a.8.8 0 0 0 0-1.400L2.700,1.100a.8.800 0 0 0-1.200.7z" fill="#fff"/></svg>
<div class="t" id="start" style="left:977px;top:712px;font-size:14px;line-height:18px;font-weight:700;color:#fff;word-spacing:1.500px;letter-spacing:-0.93px">START (F7)</div>
<!-- footer -->
<div class="t ft" id="foot" style="left:1111px;top:750px;word-spacing:1.500px;letter-spacing:-0.80px">DEVELOPED WITH</div>
<span class="abs em" style="left:1187px;top:752px;background:radial-gradient(circle at 40% 40%,#8a5a6a,#5a3444)"></span>
<div class="t ft" id="ft2" style="left:1200px;top:750px;letter-spacing:-1.01px">BY</div>
<span class="abs em" style="left:1214px;top:752px;background:radial-gradient(circle at 40% 40%,#f08aa6,#c2506e)"></span>
<div class="t ft" id="ft3" style="left:1228px;top:750px;letter-spacing:-0.67px">AT</div>
<span class="abs em" style="left:1241px;top:751px;width:9px;height:9px;border-radius:5px;background:#f4f4f6;border:1.500px solid #5a4a4e"></span>
<svg class="abs" style="left:1241px;top:751px" width="9" height="9" viewBox="0 0 9 9" fill="none" stroke="#5a4a4e" stroke-width="1"><path d="M4.500,2.300V4.700H6.500"/></svg>
<div class="t ft" id="ft4" style="left:1252px;top:750px;letter-spacing:0.00px">AM</div>
</div>

<div id="tb"></div>
<div id="tbc">
<!-- weather -->
<svg class="abs" style="left:17px;top:1040px" width="30" height="30" viewBox="0 0 30 30"><defs><linearGradient id="wcl" x1="0" y1="0" x2="0" y2="1"><stop offset="0" stop-color="#e8eefb"/><stop offset="1" stop-color="#9fb3e6"/></linearGradient></defs><circle cx="20" cy="9" r="6.500" fill="#f7931e"/><path d="M7,22.500a5,5 0 0 1 .6,-10a7,7 0 0 1 13.300,1.800a4.200,4.200 0 0 1 .5,8.200z" fill="url(#wcl)"/><path d="M16,23.500l2.200,3.300a2.300,2.300 0 1 1-4.200,0z" fill="#2f7de6"/></svg>
<div class="t" style="left:50px;top:1041px;line-height:14px">92°F</div>
<div class="t" style="left:50px;top:1057px;line-height:14px;color:#666">Light rain</div>
<!-- start -->
<svg class="abs" style="left:742px;top:1045px" width="24" height="24" viewBox="0 0 24 24"><defs><linearGradient id="wl" x1="0" y1="0" x2="1" y2="1"><stop offset="0" stop-color="#55c8ff"/><stop offset="1" stop-color="#0a78d6"/></linearGradient></defs><path fill="url(#wl)" d="M0,0H11.300V11.300H0zM12.500,0H23.800V11.300H12.500zM0,12.500H11.300V23.800H0zM12.500,12.500H23.800V23.800H12.500z"/></svg>
<!-- search -->
<div class="abs" style="left:780px;top:1041px;width:98px;height:31px;border-radius:15.500px;background:#f4f7fc;border:1px solid #e6ebf4"></div>
<svg class="abs" style="left:802px;top:1049px" width="14" height="14" viewBox="0 0 14 14" fill="none" stroke="#222" stroke-width="1.400"><circle cx="5.800" cy="5.800" r="4.300"/><path d="M9,9L13,13" stroke-linecap="round"/></svg>
<div class="t" style="left:821.500px;top:1049.500px;line-height:14px;letter-spacing:-.35px">Search</div>
<!-- task view -->
<svg class="abs" style="left:891px;top:1044px" width="25" height="24" viewBox="0 0 25 24"><defs><linearGradient id="tv1" x1="0" y1="0" x2="1" y2="1"><stop offset="0" stop-color="#fdfdfd"/><stop offset="1" stop-color="#cfd2d6"/></linearGradient></defs><rect x="8" y="1" width="16" height="15" rx="2" fill="url(#tv1)"/><rect x="1" y="7" width="16" height="15" rx="2" fill="#2d2d2f"/><path d="M8,7H17V16H10a2,2 0 0 1-2-2z" fill="#9a9da2"/></svg>
<!-- explorer -->
<svg class="abs" style="left:935px;top:1044px" width="26" height="24" viewBox="0 0 26 24"><path d="M1,3.500a1.500,1.500 0 0 1 1.500-1.500H9l2.500,2.500H23.500a1.500,1.500 0 0 1 1.500,1.500V8H1z" fill="#e8a400"/><rect x="1" y="6" width="24" height="16" rx="1.500" fill="#ffd04f"/><path d="M1,17H25V20.500a1.500,1.500 0 0 1-1.500,1.500H2.500a1.500,1.500 0 0 1-1.500-1.500z" fill="#f6b720"/><path d="M6,15.500a1.500,1.500 0 0 1 1.500-1.500h11a1.500,1.500 0 0 1 1.500,1.500V22H6z" fill="#1a8ae2"/><rect x="9" y="17.200" width="8" height="1.600" rx=".8" fill="#0b5cad"/></svg>
<!-- edge -->
<svg class="abs" style="left:979px;top:1044px" width="26" height="25" viewBox="0 0 26 25"><defs><linearGradient id="eg1" x1="0" y1="0" x2="1" y2="1"><stop offset="0" stop-color="#2aa8ea"/><stop offset=".5" stop-color="#1b84d8"/><stop offset="1" stop-color="#0c56a0"/></linearGradient><linearGradient id="eg2" x1="0" y1="0" x2="1" y2="0"><stop offset="0" stop-color="#2ab8e6"/><stop offset=".55" stop-color="#3ccf9a"/><stop offset="1" stop-color="#6fd84b"/></linearGradient></defs><circle cx="12.500" cy="12.500" r="11.500" fill="url(#eg1)"/><path d="M1.500,10C3,4 8,1 12.500,1C19,1 24,5.500 24,10.500C24,13.500 21.500,15.500 18.500,15.500C16,15.500 14.700,14.500 14.700,13.500C14.700,12.700 15.500,12.300 15.500,11C15.500,9 13.500,7 10.500,7C6.500,7 3,8.500 1.500,10z" fill="url(#eg2)"/><path d="M26,9.500C25.500,13 22.500,16.300 17.500,16.300C15.500,16.300 14.200,15.200 14.200,14.200C16,15.800 21.500,15.500 24,10.500z" fill="#d8e1f5"/><path d="M9.500,13.500c0,4.500 3.500,8 8,8c1.500,0 3-.5 4-1c-2,2.500-5,3.700-8,3.500C8,23.500 4.500,19.500 5,15c.300-2.500 2-4.500 4.500-4.500c1.500,0 2.500.800 2.500,1.500c-.700.300-2.500.500-2.500,1.500z" fill="#0b4f9c" fill-opacity=".7"/></svg>
<!-- store -->
<svg class="abs" style="left:1023px;top:1043px" width="25" height="26" viewBox="0 0 25 26"><path d="M8,7V4.500a2,2 0 0 1 2-2h5a2,2 0 0 1 2,2V7" fill="none" stroke="#3a9bdc" stroke-width="1.800"/><path d="M1,8.500a2,2 0 0 1 2-2H22a2,2 0 0 1 2,2V22a2.500,2.500 0 0 1-2.500,2.500H3.500A2.500,2.500 0 0 1 1,22z" fill="#0f5ea8"/><rect x="7.500" y="10.500" width="4.600" height="4.600" fill="#f25022"/><rect x="12.900" y="10.500" width="4.600" height="4.600" fill="#7fba00"/><rect x="7.500" y="15.900" width="4.600" height="4.600" fill="#00a4ef"/><rect x="12.900" y="15.900" width="4.600" height="4.600" fill="#ffb900"/></svg>
<!-- vs -->
<svg class="abs" style="left:1067px;top:1044px" width="25" height="25" viewBox="0 0 25 25"><path d="M17.500,1L24,3.500V21.500L17.500,24L7,14.500L3,17.800L1,16.800V8.200L3,7.200L7,10.500z" fill="#8b5fd6"/><path d="M17.500,1L24,3.500V21.500L17.500,24z" fill="#b48af0"/><path d="M17.500,7.500L11,12.500L17.500,17.500zM3.200,9.800V15.200L6,12.500z" fill="#e3e6f5"/><path d="M1,8.200L3,7.200L17.500,20V24L7,14.500L3,17.800L1,16.800z" fill="#6f42c1" fill-opacity=".6"/></svg>
<!-- settings -->
<svg class="abs" style="left:1111px;top:1044px" width="25" height="25" viewBox="0 0 24 24"><path d="M10.200,1.300h3.600l.7,3 2.300,1.300 2.900-1 1.800,3.100-2.200,2.100v2.400l2.200,2.100-1.800,3.100-2.900-1-2.300,1.300-.7,3h-3.600l-.7-3-2.300-1.300-2.900,1-1.800-3.100 2.200-2.100v-2.400l-2.200-2.100 1.800-3.100 2.900,1 2.300-1.300z" fill="#767b82" stroke="#767b82" stroke-width="1.200" stroke-linejoin="round"/><circle cx="12" cy="12" r="5" fill="#dfe5ee"/><circle cx="12" cy="12" r="3.600" fill="#1a6fd4"/></svg>
<!-- auto clicker active -->
<div class="abs" style="left:1148px;top:1037px;width:39px;height:38px;border-radius:4px;background:#f2f5fb;border:1px solid #e4e9f3"></div>
<svg class="abs" style="left:1156px;top:1042px" width="26" height="28" viewBox="0 0 26 28"><path d="M2,1.500L24.500,13L13,17L7.500,26.500z" fill="#f58220"/><path d="M13,17L24.500,13L9.500,14.500z" fill="#d9640f"/></svg>
<div class="abs" style="left:1077px;top:1072px;width:6px;height:3px;border-radius:1.500px;background:#85888e"></div>
<div class="abs" style="left:1121px;top:1072px;width:6px;height:3px;border-radius:1.500px;background:#85888e"></div>
<div class="abs" style="left:1160px;top:1072px;width:16px;height:3px;border-radius:1.500px;background:#1a73d8"></div>
<!-- tray -->
<svg class="abs" style="left:1630px;top:1051px" width="14" height="10" viewBox="0 0 14 10" fill="none" stroke="#222" stroke-width="1.300"><path d="M2,8L7,3L12,8"/></svg>
<svg class="abs" style="left:1659px;top:1047px" width="19" height="19" viewBox="0 0 19 19" fill="none" stroke="#222" stroke-width="1.200"><path d="M3,8a6.500,6.500 0 0 1 12-2.500M15.500,2V6H11.500M16,11a6.500,6.500 0 0 1-12,2.500M3.500,17V13H7.500"/><circle cx="14.300" cy="13.500" r="4" fill="#f7941d" stroke="none"/></svg>
<svg class="abs" style="left:1691px;top:1048px" width="20" height="17" viewBox="0 0 20 17" fill="none" stroke="#222" stroke-width="1.200"><path d="M5,13.500a3.500,3.500 0 0 1 .3-7a5,5 0 0 1 9.500,1a3,3 0 0 1 .2,6z" fill="#8d9096"/><path d="M3,2L17,15.500" stroke-width="1.500"/></svg>
<svg class="abs" style="left:1724px;top:1047px" width="19" height="19" viewBox="0 0 19 19" fill="none" stroke="#222" stroke-width="1.200"><path d="M12,3H2.500a1,1 0 0 0-1,1v8.500a1,1 0 0 0 1,1H12M5,16.500H11M8,13.500V16.500M11,16.500H15.500V9"/><rect x="14" y="1.500" width="3" height="5" rx="1"/></svg>
<svg class="abs" style="left:1748px;top:1049px" width="18" height="15" viewBox="0 0 18 15" fill="none" stroke="#222" stroke-width="1.100"><path d="M1.500,5H4L7.500,2V13L4,10H1.500z"/><path d="M11,5L16,10M16,5L11,10"/></svg>
<div class="t" style="left:1738px;top:1042px;width:100px;text-align:right;line-height:14px">4:48 PM</div>
<div class="t" style="left:1737.500px;top:1057.500px;width:100px;text-align:right;line-height:14px">7/10/2024</div>
<svg class="abs" style="left:1844px;top:1047px" width="16" height="18" viewBox="0 0 16 18" fill="none" stroke="#222" stroke-width="1.200"><path d="M3,12V8a5,5 0 0 1 10,0v4l1.200,2H1.800zM6.200,14.500a1.800,1.800 0 0 0 3.600,0"/></svg>
<svg class="abs" style="left:1876px;top:1044px" width="26" height="25" viewBox="0 0 26 25"><defs><linearGradient id="cp1" x1="0" y1="0" x2="1" y2="1"><stop offset="0" stop-color="#2bb3e8"/><stop offset=".5" stop-color="#3a6fe0"/><stop offset="1" stop-color="#b44bd8"/></linearGradient><linearGradient id="cp2" x1="0" y1="0" x2="0" y2="1"><stop offset="0" stop-color="#5fd0a0"/><stop offset="1" stop-color="#f2c230"/></linearGradient></defs><path d="M9,2h7c2,0 3,1 3.500,3l1,4h1.500c2,0 2.500,1.500 2,3l-2,7c-.500,2-2,3-4,3H8c-2,0-3-1-3.500-3L3.500,15H3c-2,0-2.500-1.500-2-3L3,5C3.500,3 6,2 9,2z" fill="url(#cp1)"/><path d="M3,5C3.500,3 5,2 7,2h3L6,16H3c-2,0-2.500-1.500-2-3z" fill="url(#cp2)"/><path d="M16,8h5.500c2,0 2.500,1.500 2,3l-2,7c-.500,2-2,3-4,3H13z" fill="#e05aa8" fill-opacity=".8"/><rect x="6" y="16.500" width="18" height="7.500" rx="2" fill="#f5c518"/></svg>
<div class="t" style="left:1884px;top:1061px;font-size:6px;line-height:7px;font-weight:700;color:#222;letter-spacing:.2px">PRE</div>
</div>

</div>
</body>
</html>
